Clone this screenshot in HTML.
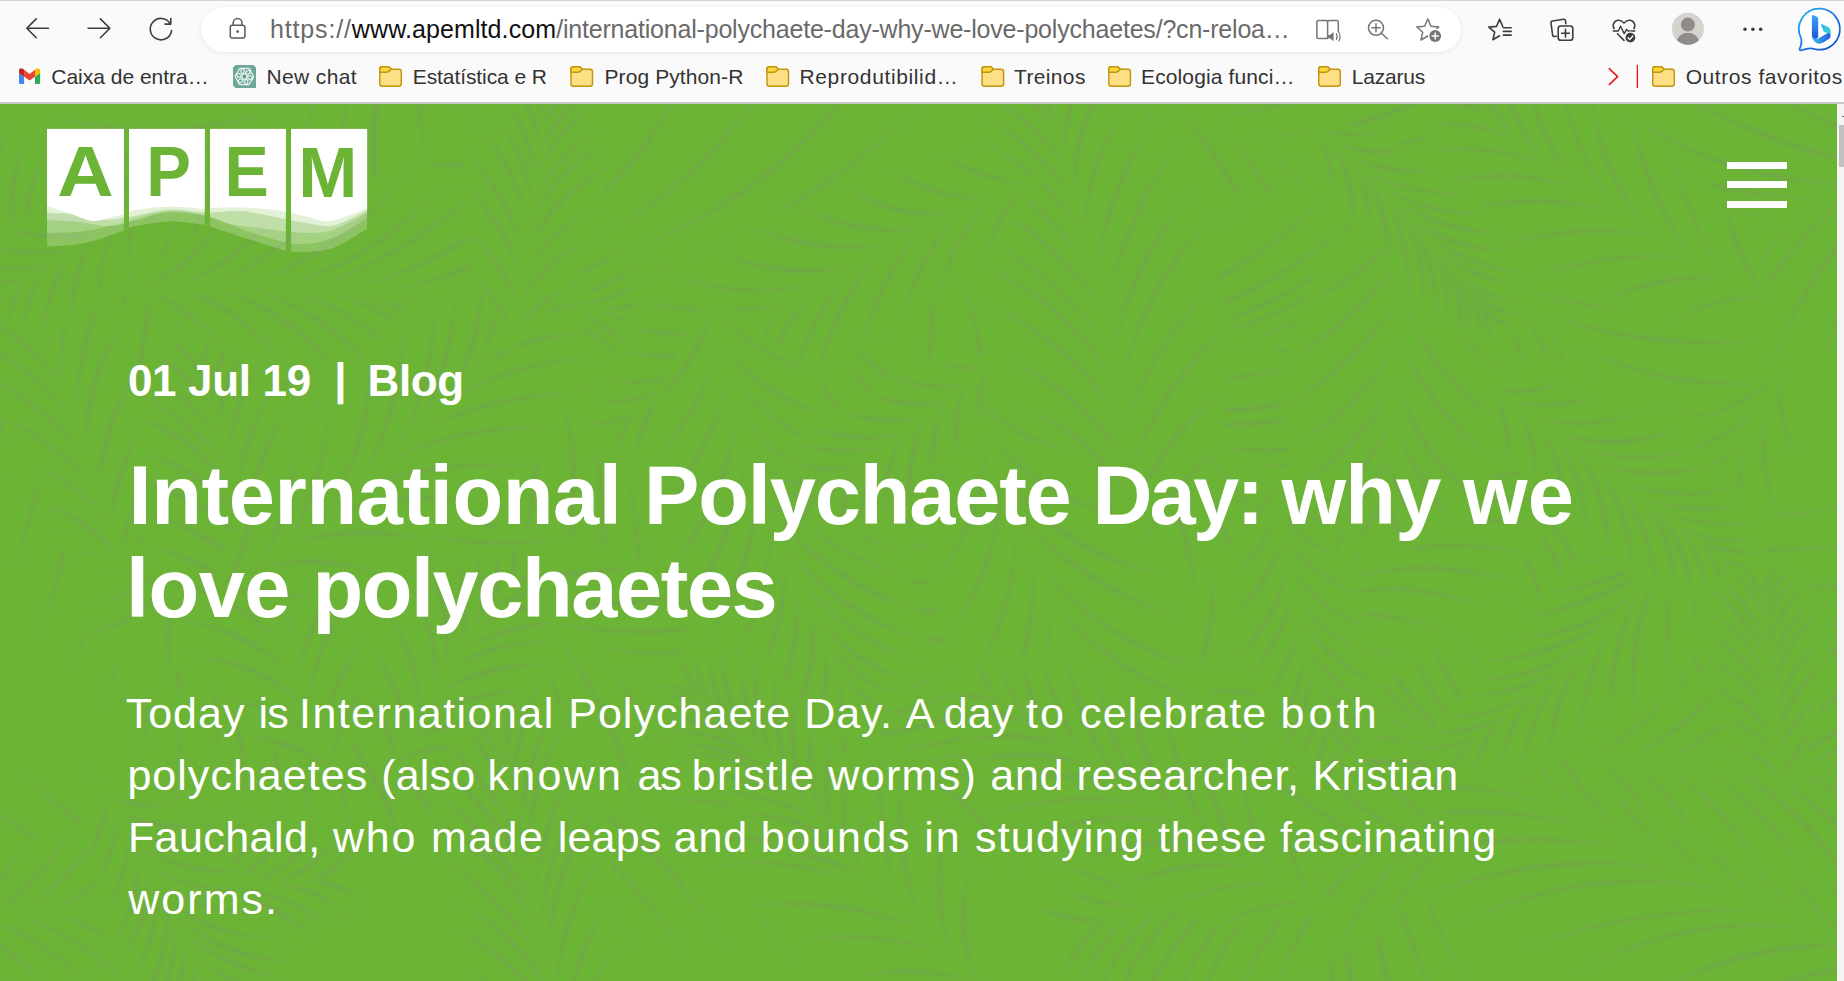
<!DOCTYPE html>
<html lang="en">
<head>
<meta charset="utf-8">
<title>International Polychaete Day: why we love polychaetes - APEM</title>
<style>
*{box-sizing:border-box;margin:0;padding:0}
html,body{width:1844px;height:981px;overflow:hidden;background:#6cb435}
body{position:relative;font-family:"Liberation Sans",sans-serif}
.abs{position:absolute}
/* ---------- browser chrome ---------- */
#chrome{position:absolute;left:0;top:0;width:1844px;height:104px;background:#fafafa;box-shadow:inset 0 1px 0 #d4d4d4,inset 0 -2px 0 #c8c8c8}
#pill{position:absolute;left:201px;top:7px;width:1260px;height:45px;border-radius:23px;background:#fff;box-shadow:0 1px 5px rgba(0,0,0,.075),0 0 1px rgba(0,0,0,.05)}
#url{position:absolute;left:270px;top:13.5px;font-size:25px;line-height:30px;white-space:pre;color:#6a6a6a;letter-spacing:-0.08px}
#url b{font-weight:400;color:#111}
.bm{position:absolute;top:64px;height:26px;font-size:21px;line-height:26px;color:#333;white-space:pre}
/* ---------- page ---------- */
#page{position:absolute;left:0;top:104px;width:1837px;height:877px;background:#6cb435;overflow:hidden}
#sb{position:absolute;left:1837px;top:104px;width:7px;height:877px;background:#f4f4f4}
#sb b{position:absolute;left:5px;top:12px;width:2px;height:1px;background:#777}
#sb i{position:absolute;left:2px;top:21px;width:5px;height:42px;background:#c1c1c1}
h1,p{font:inherit}
.t{position:absolute;left:128px;color:#fff;white-space:pre}
.date{font-weight:700;font-size:44px;line-height:50px}
.h1w{font-weight:700;font-size:83px;line-height:92px;height:92px}
.p{font-weight:400;font-size:43px;line-height:62px;letter-spacing:1.14px}
</style>
</head>
<body>
<div id="page">
<!--PATTERN--><svg class="abs" style="left:0;top:0" width="1837" height="877" viewBox="0 0 1837 877"><defs><filter id="sf" x="0" y="0" width="1837" height="877" filterUnits="userSpaceOnUse"><feGaussianBlur stdDeviation="0.9"/></filter></defs><g filter="url(#sf)"><path fill="#6cb435" d="M2071,13L1904,-45L1820,-41L1746,-31L1666,-22L1611,-2L1548,16L1505,41L1433,59L1394,85L1382,117L1372,147L1352,174L1318,199L1299,226L1293,251L1272,275L1287,372L1309,357L1344,349L1362,364L1383,378L1423,366L1456,367L1472,391L1514,381L1576,343L1615,339L1661,326L1711,307L1765,283L1825,250L1897,199L1955,170Z"/><path fill="#808080" fill-opacity=".2" d="M2052,19Q1968,10 1904,-45Q1965,18 2052,19ZM2052,19Q1979,79 1955,170Q1986,83 2052,19ZM2006,33Q1903,21 1820,-41Q1899,31 2006,33ZM2006,33Q1915,93 1897,199Q1924,99 2006,33ZM1960,48Q1842,39 1746,-31Q1838,47 1960,48ZM1960,48Q1857,126 1825,250Q1866,132 1960,48ZM1914,63Q1779,51 1666,-22Q1776,60 1914,63ZM1914,63Q1803,148 1765,283Q1810,153 1914,63ZM1868,79Q1726,81 1611,-2Q1724,89 1868,79ZM1868,79Q1743,161 1711,307Q1751,167 1868,79ZM1822,95Q1676,86 1548,16Q1674,95 1822,95ZM1822,95Q1709,188 1661,326Q1716,193 1822,95ZM1776,111Q1634,102 1505,41Q1632,110 1776,111ZM1776,111Q1659,199 1615,339Q1665,204 1776,111ZM1731,128Q1573,133 1433,59Q1571,143 1731,128ZM1731,128Q1627,216 1576,343Q1634,221 1731,128ZM1686,145Q1532,151 1394,85Q1530,162 1686,145ZM1686,145Q1564,237 1514,381Q1571,242 1686,145ZM1641,163Q1506,168 1382,117Q1504,179 1641,163ZM1641,163Q1511,243 1472,391Q1518,249 1641,163ZM1596,181Q1480,191 1372,147Q1479,199 1596,181ZM1596,181Q1491,248 1456,367Q1500,254 1596,181ZM1551,200Q1449,206 1352,174Q1448,214 1551,200ZM1551,200Q1456,259 1423,366Q1463,265 1551,200ZM1506,219Q1410,232 1318,199Q1409,241 1506,219ZM1506,219Q1416,276 1383,378Q1423,282 1506,219ZM1462,238Q1378,257 1299,226Q1378,265 1462,238ZM1462,238Q1386,281 1362,364Q1394,287 1462,238ZM1417,258Q1355,272 1293,251Q1354,281 1417,258ZM1417,258Q1366,291 1344,349Q1374,297 1417,258ZM1373,278Q1322,283 1272,275Q1322,293 1373,278ZM1373,278Q1327,306 1309,357Q1334,312 1373,278Z"/><path fill="#6cb435" d="M1056,-33L1159,104L1214,138L1269,179L1332,240L1378,278L1422,317L1448,320L1480,338L1521,388L1554,422L1579,434L1601,436L1620,431L1645,449L1666,447L1691,474L1713,483L1592,683L1784,423L1781,389L1796,359L1774,316L1773,278L1761,236L1775,195L1746,149L1697,105L1657,62L1600,24L1546,-11L1483,-41L1444,-77L1353,-89L1307,-116L1206,-109Z"/><path fill="#808080" fill-opacity=".2" d="M1075,-28Q1136,26 1159,104Q1143,21 1075,-28ZM1075,-28Q1157,-42 1206,-109Q1153,-49 1075,-28ZM1122,-17Q1185,51 1214,138Q1193,46 1122,-17ZM1122,-17Q1231,-35 1307,-116Q1227,-43 1122,-17ZM1168,-3Q1242,75 1269,179Q1251,70 1168,-3ZM1168,-3Q1275,-14 1353,-89Q1271,-22 1168,-3ZM1213,13Q1298,113 1332,240Q1307,108 1213,13ZM1213,13Q1342,3 1444,-77Q1338,-7 1213,13ZM1257,31Q1356,136 1378,278Q1365,132 1257,31ZM1257,31Q1384,37 1483,-41Q1381,28 1257,31ZM1301,51Q1396,168 1422,317Q1403,165 1301,51ZM1301,51Q1432,52 1546,-11Q1430,44 1301,51ZM1344,72Q1431,181 1448,320Q1440,177 1344,72ZM1344,72Q1480,94 1600,24Q1479,86 1344,72ZM1385,96Q1461,206 1480,338Q1469,203 1385,96ZM1385,96Q1525,116 1657,62Q1524,107 1385,96ZM1426,121Q1497,246 1521,388Q1505,243 1426,121ZM1426,121Q1564,153 1697,105Q1563,144 1426,121ZM1465,149Q1548,273 1554,422Q1556,270 1465,149ZM1465,149Q1606,189 1746,149Q1606,181 1465,149ZM1503,178Q1582,294 1579,434Q1592,291 1503,178ZM1503,178Q1636,231 1775,195Q1637,223 1503,178ZM1540,208Q1595,316 1601,436Q1605,313 1540,208ZM1540,208Q1647,252 1761,236Q1648,242 1540,208ZM1575,241Q1629,328 1620,431Q1637,326 1575,241ZM1575,241Q1668,293 1773,278Q1670,284 1575,241ZM1609,274Q1643,358 1645,449Q1652,357 1609,274ZM1609,274Q1683,328 1774,316Q1686,319 1609,274ZM1642,310Q1673,375 1666,447Q1684,373 1642,310ZM1642,310Q1712,355 1796,359Q1715,346 1642,310ZM1672,347Q1694,409 1691,474Q1702,407 1672,347ZM1672,347Q1720,384 1781,389Q1723,377 1672,347ZM1701,385Q1717,432 1713,483Q1726,431 1701,385ZM1701,385Q1735,420 1784,423Q1740,411 1701,385Z"/><path fill="#6cb435" d="M11,163L-24,318L-8,387L9,473L36,540L69,577L103,613L139,671L177,697L212,703L245,706L280,723L312,729L343,735L365,723L396,736L554,612L442,676L428,657L433,644L413,622L416,607L426,595L406,572L375,542L361,518L320,480L298,449L258,407L228,368L184,318L147,269Z"/><path fill="#808080" fill-opacity=".2" d="M17,182Q11,254 -24,318Q20,257 17,182ZM17,182Q66,249 147,269Q71,243 17,182ZM32,221Q29,308 -8,387Q37,310 32,221ZM32,221Q92,294 184,318Q97,286 32,221ZM48,259Q48,370 9,473Q57,371 48,259ZM48,259Q120,345 228,368Q125,336 48,259ZM66,297Q79,422 36,540Q89,423 66,297ZM66,297Q139,393 258,407Q144,384 66,297ZM86,334Q110,458 69,577Q119,458 86,334ZM86,334Q175,422 298,449Q179,414 86,334ZM107,370Q136,492 103,613Q145,492 107,370ZM107,370Q191,469 320,480Q196,460 107,370ZM129,406Q156,537 139,671Q166,537 129,406ZM129,406Q225,502 361,518Q229,494 129,406ZM152,440Q187,567 177,697Q196,566 152,440ZM152,440Q246,530 375,542Q250,521 152,440ZM177,474Q230,583 212,703Q238,582 177,474ZM177,474Q278,555 406,572Q282,546 177,474ZM203,506Q241,603 245,706Q251,601 203,506ZM203,506Q302,581 426,595Q306,571 203,506ZM231,538Q282,623 280,723Q290,621 231,538ZM231,538Q314,598 416,607Q318,588 231,538ZM260,568Q300,644 312,729Q309,641 260,568ZM260,568Q328,621 413,622Q331,612 260,568ZM290,597Q334,659 343,735Q343,656 290,597ZM290,597Q352,649 433,644Q354,641 290,597ZM321,626Q349,671 365,723Q358,668 321,626ZM321,626Q369,660 428,657Q371,651 321,626ZM353,652Q381,691 396,736Q389,686 353,652ZM353,652Q392,683 442,676Q394,675 353,652Z"/><path fill="#6cb435" d="M668,-20L454,-28L421,4L328,36L288,72L232,111L191,151L133,196L127,233L77,281L79,316L78,351L59,392L51,429L68,454L92,472L86,504L86,532L224,668L171,574L190,557L208,553L223,572L246,542L258,575L283,538L301,546L323,527L353,483L379,456L407,429L440,383L483,307L519,263L560,204L600,157Z"/><path fill="#808080" fill-opacity=".2" d="M651,-9Q550,6 454,-28Q549,15 651,-9ZM651,-9Q594,64 600,157Q604,67 651,-9ZM616,15Q518,30 421,4Q517,38 616,15ZM616,15Q561,102 560,204Q570,104 616,15ZM582,40Q454,80 328,36Q454,89 582,40ZM582,40Q504,138 519,263Q513,141 582,40ZM549,65Q419,98 288,72Q419,108 549,65ZM549,65Q468,173 483,307Q478,176 549,65ZM516,92Q377,146 232,111Q378,156 516,92ZM516,92Q432,226 440,383Q442,228 516,92ZM484,119Q340,164 191,151Q341,173 484,119ZM484,119Q393,261 407,429Q402,263 484,119ZM452,147Q300,223 133,196Q302,231 452,147ZM452,147Q364,290 379,456Q373,292 452,147ZM422,176Q282,244 127,233Q284,253 422,176ZM422,176Q330,317 353,483Q339,319 422,176ZM392,206Q241,271 77,281Q243,279 392,206ZM392,206Q303,355 323,527Q313,357 392,206ZM363,236Q233,320 79,316Q236,329 363,236ZM363,236Q290,383 301,546Q300,385 363,236ZM335,268Q220,352 78,351Q223,360 335,268ZM335,268Q262,394 283,538Q273,396 335,268ZM307,300Q193,373 59,392Q196,382 307,300ZM307,300Q240,430 258,575Q248,431 307,300ZM281,332Q180,415 51,429Q183,423 281,332ZM281,332Q223,431 246,542Q231,432 281,332ZM255,366Q173,434 68,454Q177,443 255,366ZM255,366Q207,464 223,572Q216,465 255,366ZM230,400Q170,454 92,472Q174,461 230,400ZM230,400Q193,472 208,553Q203,474 230,400ZM206,435Q152,480 86,504Q156,487 206,435ZM206,435Q179,493 190,557Q187,494 206,435ZM183,470Q140,510 86,532Q146,518 183,470ZM183,470Q157,520 171,574Q166,521 183,470Z"/><path fill="#6cb435" d="M384,807L249,696L160,668L79,655L12,659L-44,674L-83,699L-158,709L-205,734L-231,767L-218,807L-235,836L-249,864L-252,891L-221,1066L-219,972L-196,971L-194,993L-174,997L-154,1000L-125,996L-99,996L-83,1005L-24,980L12,975L90,941L161,916L239,891Z"/><path fill="#808080" fill-opacity=".2" d="M364,805Q299,758 249,696Q292,766 364,805ZM364,805Q284,822 239,891Q289,830 364,805ZM320,802Q224,754 160,668Q217,762 320,802ZM320,802Q222,833 161,916Q227,841 320,802ZM276,802Q161,750 79,655Q156,757 276,802ZM276,802Q156,836 90,941Q161,843 276,802ZM232,803Q110,749 12,659Q104,758 232,803ZM232,803Q97,857 12,975Q102,863 232,803ZM188,805Q60,761 -44,674Q56,769 188,805ZM188,805Q61,867 -24,980Q67,874 188,805ZM144,810Q20,775 -83,699Q16,784 144,810ZM144,810Q4,877 -83,1005Q10,883 144,810ZM100,817Q-45,801 -158,709Q-48,809 100,817ZM100,817Q-29,873 -99,996Q-23,880 100,817ZM57,825Q-85,812 -205,734Q-89,822 57,825ZM57,825Q-57,886 -125,996Q-50,894 57,825ZM14,835Q-118,838 -231,767Q-121,846 14,835ZM14,835Q-101,885 -154,1000Q-95,892 14,835ZM-28,847Q-127,847 -218,807Q-129,857 -28,847ZM-28,847Q-126,898 -174,997Q-119,904 -28,847ZM-70,861Q-156,874 -235,836Q-158,883 -70,861ZM-70,861Q-160,901 -194,993Q-153,907 -70,861ZM-111,876Q-182,886 -249,864Q-182,896 -111,876ZM-111,876Q-171,908 -196,971Q-163,916 -111,876ZM-152,893Q-202,905 -252,891Q-202,913 -152,893ZM-152,893Q-199,920 -219,972Q-193,926 -152,893Z"/><path fill="#6cb435" d="M1342,281L1451,450L1507,504L1559,555L1591,569L1633,608L1680,659L1709,677L1740,702L1765,714L1769,679L1795,697L1804,675L1827,688L1809,747L1890,627L1892,602L1905,578L1907,547L1903,514L1887,477L1856,439L1851,402L1780,364L1744,329L1664,300L1604,272L1535,250Z"/><path fill="#808080" fill-opacity=".2" d="M1360,289Q1429,356 1451,450Q1438,351 1360,289ZM1360,289Q1453,293 1535,250Q1451,282 1360,289ZM1400,307Q1484,389 1507,504Q1493,384 1400,307ZM1400,307Q1507,319 1604,272Q1505,310 1400,307ZM1439,327Q1526,427 1559,555Q1535,422 1439,327ZM1439,327Q1557,359 1664,300Q1556,349 1439,327ZM1477,348Q1567,442 1591,569Q1575,438 1477,348ZM1477,348Q1613,371 1744,329Q1613,362 1477,348ZM1515,370Q1598,478 1633,608Q1607,473 1515,370ZM1515,370Q1648,401 1780,364Q1648,392 1515,370ZM1552,393Q1650,509 1680,659Q1660,505 1552,393ZM1552,393Q1700,435 1851,402Q1701,425 1552,393ZM1588,418Q1683,532 1709,677Q1690,528 1588,418ZM1588,418Q1719,464 1856,439Q1720,455 1588,418ZM1624,443Q1714,558 1740,702Q1722,554 1624,443ZM1624,443Q1750,503 1887,477Q1751,493 1624,443ZM1659,470Q1739,580 1765,714Q1747,576 1659,470ZM1659,470Q1771,543 1903,514Q1773,533 1659,470ZM1692,497Q1746,582 1769,679Q1754,578 1692,497ZM1692,497Q1791,562 1907,547Q1793,552 1692,497ZM1725,526Q1775,606 1795,697Q1783,602 1725,526ZM1725,526Q1806,586 1905,578Q1808,577 1725,526ZM1757,556Q1789,612 1804,675Q1799,609 1757,556ZM1757,556Q1815,607 1892,602Q1818,598 1757,556ZM1789,587Q1815,635 1827,688Q1824,631 1789,587ZM1789,587Q1830,629 1890,627Q1834,619 1789,587Z"/><path fill="#6cb435" d="M514,-213L355,-205L281,-171L234,-135L156,-100L120,-64L58,-27L36,8L8,44L-26,79L-46,113L-96,149L-99,180L-110,211L-107,240L-118,269L-123,296L-139,325L-63,365L-36,369L-6,372L30,358L65,353L100,351L138,339L180,306L219,296L258,286L303,232L347,167L387,154L428,67L468,16L505,-54Z"/><path fill="#808080" fill-opacity=".2" d="M499,-199Q427,-190 355,-205Q426,-180 499,-199ZM499,-199Q479,-125 505,-54Q488,-126 499,-199ZM465,-165Q373,-144 281,-171Q372,-134 465,-165ZM465,-165Q442,-74 468,16Q452,-74 465,-165ZM431,-132Q332,-107 234,-135Q332,-98 431,-132ZM431,-132Q404,-32 428,67Q414,-32 431,-132ZM396,-98Q276,-77 156,-100Q276,-69 396,-98ZM396,-98Q351,26 387,154Q362,27 396,-98ZM362,-65Q241,-28 120,-64Q241,-17 362,-65ZM362,-65Q323,49 347,167Q331,49 362,-65ZM327,-33Q193,3 58,-27Q193,14 327,-33ZM327,-33Q266,95 303,232Q276,96 327,-33ZM292,-0Q165,44 36,8Q165,52 292,-0ZM292,-0Q228,138 258,286Q237,139 292,-0ZM256,32Q133,65 8,44Q134,74 256,32ZM256,32Q202,159 219,296Q211,160 256,32ZM221,64Q99,94 -26,79Q99,104 221,64ZM221,64Q160,178 180,306Q169,180 221,64ZM185,96Q72,136 -46,113Q72,145 185,96ZM185,96Q128,211 138,339Q138,213 185,96ZM149,128Q30,173 -96,149Q30,184 149,128ZM149,128Q97,233 100,351Q106,235 149,128ZM113,159Q9,189 -99,180Q10,198 113,159ZM113,159Q60,249 65,353Q68,251 113,159ZM77,191Q-15,219 -110,211Q-14,229 77,191ZM77,191Q21,266 30,358Q30,268 77,191ZM40,221Q-31,248 -107,240Q-30,257 40,221ZM40,221Q-5,290 -6,372Q5,293 40,221ZM3,252Q-56,272 -118,269Q-55,281 3,252ZM3,252Q-33,305 -36,369Q-23,308 3,252ZM-34,283Q-77,300 -123,296Q-75,309 -34,283ZM-34,283Q-66,317 -63,365Q-56,321 -34,283Z"/><path fill="#6cb435" d="M1481,198L1335,255L1280,310L1261,354L1216,409L1178,463L1146,516L1123,566L1117,607L1114,646L1119,680L1125,711L1112,755L1135,770L1135,802L1195,858L1199,833L1220,807L1243,799L1267,793L1292,783L1317,759L1342,736L1362,669L1390,659L1410,589L1435,551L1455,477L1478,423L1495,339Z"/><path fill="#808080" fill-opacity=".2" d="M1471,215Q1409,255 1335,255Q1412,265 1471,215ZM1471,215Q1457,282 1495,339Q1467,280 1471,215ZM1447,255Q1370,304 1280,310Q1373,313 1447,255ZM1447,255Q1438,344 1478,423Q1447,342 1447,255ZM1423,295Q1350,345 1261,354Q1352,352 1423,295ZM1423,295Q1411,391 1455,477Q1419,390 1423,295ZM1400,336Q1320,403 1216,409Q1323,410 1400,336ZM1400,336Q1377,450 1435,551Q1387,449 1400,336ZM1377,377Q1289,445 1178,463Q1292,453 1377,377ZM1377,377Q1350,490 1410,589Q1361,488 1377,377ZM1355,418Q1262,492 1146,516Q1266,499 1355,418ZM1355,418Q1333,544 1390,659Q1344,543 1355,418ZM1333,459Q1245,546 1123,566Q1249,553 1333,459ZM1333,459Q1304,570 1362,669Q1313,569 1333,459ZM1312,500Q1227,577 1117,607Q1231,584 1312,500ZM1312,500Q1292,623 1342,736Q1302,621 1312,500ZM1291,542Q1214,614 1114,646Q1219,622 1291,542ZM1291,542Q1260,656 1317,759Q1270,655 1291,542ZM1270,584Q1209,655 1119,680Q1214,662 1270,584ZM1270,584Q1239,688 1292,783Q1249,687 1270,584ZM1250,626Q1200,688 1125,711Q1206,695 1250,626ZM1250,626Q1223,713 1267,793Q1233,712 1250,626ZM1231,669Q1183,727 1112,755Q1189,736 1231,669ZM1231,669Q1212,736 1243,799Q1222,735 1231,669ZM1212,711Q1180,749 1135,770Q1185,757 1212,711ZM1212,711Q1201,760 1220,807Q1210,760 1212,711ZM1193,754Q1170,785 1135,802Q1176,792 1193,754ZM1193,754Q1181,795 1199,833Q1191,794 1193,754Z"/><path fill="#6cb435" d="M625,635L672,468L659,387L644,289L615,239L585,169L549,135L513,101L477,89L442,72L407,50L384,77L355,63L221,125L304,112L291,124L302,150L300,169L281,177L301,211L323,248L321,269L388,343L397,375L457,450L506,521Z"/><path fill="#808080" fill-opacity=".2" d="M620,616Q629,536 672,468Q620,533 620,616ZM620,616Q581,547 506,521Q575,553 620,616ZM606,570Q611,472 659,387Q602,470 606,570ZM606,570Q548,489 457,450Q542,497 606,570ZM591,525Q580,399 644,289Q571,397 591,525ZM591,525Q521,415 397,375Q516,422 591,525ZM574,481Q557,353 615,239Q546,352 574,481ZM574,481Q506,379 388,343Q500,386 574,481ZM555,437Q535,299 585,169Q526,298 555,437ZM555,437Q472,305 321,269Q467,313 555,437ZM535,394Q503,263 549,135Q492,262 535,394ZM535,394Q452,287 323,248Q446,296 535,394ZM513,352Q471,226 513,101Q461,226 513,352ZM513,352Q426,253 301,211Q421,261 513,352ZM490,310Q452,202 477,89Q443,202 490,310ZM490,310Q407,210 281,177Q403,217 490,310ZM465,270Q424,174 442,72Q415,175 465,270ZM465,270Q400,190 300,169Q395,200 465,270ZM439,230Q406,143 407,50Q398,145 439,230ZM439,230Q385,164 302,150Q381,172 439,230ZM411,192Q380,138 384,77Q372,140 411,192ZM411,192Q360,142 291,124Q355,150 411,192ZM382,154Q360,111 355,63Q351,114 382,154ZM382,154Q353,115 304,112Q349,122 382,154Z"/><path fill="#6cb435" d="M1528,690L1387,585L1310,551L1239,519L1189,504L1152,500L1079,460L1050,461L991,430L972,439L913,405L874,391L861,405L826,393L797,386L778,392L745,379L740,401L708,388L684,385L706,248L639,463L674,488L688,512L672,538L700,564L719,591L720,622L763,647L791,674L825,701L869,724L923,742L977,759L1015,782L1090,787L1155,793L1240,786L1307,785L1353,795Z"/><path fill="#808080" fill-opacity=".2" d="M1508,689Q1432,655 1387,585Q1427,661 1508,689ZM1508,689Q1411,713 1353,795Q1417,722 1508,689ZM1464,686Q1377,630 1310,551Q1370,638 1464,686ZM1464,686Q1372,715 1307,785Q1377,723 1464,686ZM1420,682Q1312,620 1239,519Q1305,627 1420,682ZM1420,682Q1314,707 1240,786Q1320,716 1420,682ZM1376,677Q1253,622 1189,504Q1247,630 1376,677ZM1376,677Q1245,697 1155,793Q1250,706 1376,677ZM1332,671Q1222,607 1152,500Q1215,614 1332,671ZM1332,671Q1195,694 1090,787Q1199,703 1332,671ZM1289,663Q1162,584 1079,460Q1155,591 1289,663ZM1289,663Q1132,677 1015,782Q1135,685 1289,663ZM1245,655Q1114,592 1050,461Q1109,597 1245,655ZM1245,655Q1091,655 977,759Q1094,663 1245,655ZM1202,645Q1067,567 991,430Q1059,574 1202,645ZM1202,645Q1045,643 923,742Q1048,653 1202,645ZM1159,635Q1047,555 972,439Q1041,561 1159,635ZM1159,635Q999,630 869,724Q1002,640 1159,635ZM1116,623Q995,532 913,405Q988,539 1116,623ZM1116,623Q956,606 825,701Q958,616 1116,623ZM1074,610Q940,531 874,391Q933,538 1074,610ZM1074,610Q922,597 791,674Q924,605 1074,610ZM1032,597Q922,522 861,405Q915,529 1032,597ZM1032,597Q889,579 763,647Q891,588 1032,597ZM990,582Q881,511 826,393Q874,517 990,582ZM990,582Q850,567 720,622Q852,577 990,582ZM949,566Q857,490 797,386Q849,496 949,566ZM949,566Q829,531 719,591Q829,539 949,566ZM908,549Q823,487 778,392Q817,492 908,549ZM908,549Q801,522 700,564Q802,532 908,549ZM868,531Q786,472 745,379Q778,478 868,531ZM868,531Q769,500 672,538Q769,509 868,531ZM828,512Q768,469 740,401Q761,475 828,512ZM828,512Q758,491 688,512Q758,500 828,512ZM788,492Q732,452 708,388Q726,458 788,492ZM788,492Q732,467 674,488Q732,478 788,492ZM749,472Q708,435 684,385Q700,441 749,472ZM749,472Q696,443 639,463Q695,451 749,472Z"/><path fill="#6cb435" d="M461,142L600,262L697,315L762,339L810,349L880,388L929,408L970,419L990,404L1000,374L1016,352L1041,345L1051,439L1083,240L1083,201L1082,156L1078,106L1063,52L991,23L929,-8L872,-41L779,-42L688,-33L588,0Z"/><path fill="#808080" fill-opacity=".2" d="M481,141Q554,189 600,262Q560,183 481,141ZM481,141Q556,87 588,0Q548,80 481,141ZM533,139Q637,207 697,315Q644,200 533,139ZM533,139Q643,82 688,-33Q636,76 533,139ZM585,140Q701,215 762,339Q708,209 585,140ZM585,140Q712,81 779,-42Q706,75 585,140ZM637,144Q745,228 810,349Q753,221 637,144ZM637,144Q785,90 872,-41Q778,82 637,144ZM688,150Q816,243 880,388Q824,237 688,150ZM688,150Q828,101 929,-8Q824,94 688,150ZM740,160Q873,254 929,408Q880,249 740,160ZM740,160Q891,139 991,23Q887,132 740,160ZM790,172Q920,267 970,419Q927,261 790,172ZM790,172Q944,153 1063,52Q941,145 790,172ZM840,187Q946,274 990,404Q953,269 840,187ZM840,187Q972,185 1078,106Q969,176 840,187ZM889,205Q960,279 1000,374Q967,275 889,205ZM889,205Q993,213 1082,156Q991,203 889,205ZM937,225Q992,279 1016,352Q999,274 937,225ZM937,225Q1014,238 1083,201Q1012,227 937,225ZM983,248Q1023,290 1041,345Q1031,286 983,248ZM983,248Q1035,263 1083,240Q1034,254 983,248Z"/><path fill="#6cb435" d="M788,210L946,343L1035,377L1102,387L1195,415L1259,418L1318,416L1346,392L1416,395L1435,369L1438,336L1472,321L1467,291L1491,274L1507,175L1481,181L1451,174L1446,153L1449,127L1407,124L1396,103L1389,79L1345,74L1256,92L1206,88L1129,99L1040,116L978,118Z"/><path fill="#808080" fill-opacity=".2" d="M807,213Q888,266 946,343Q895,259 807,213ZM807,213Q908,193 978,118Q904,186 807,213ZM855,218Q968,271 1035,377Q975,264 855,218ZM855,218Q967,204 1040,116Q963,196 855,218ZM902,223Q1017,287 1102,387Q1023,279 902,223ZM902,223Q1039,204 1129,99Q1035,196 902,223ZM950,227Q1090,298 1195,415Q1096,290 950,227ZM950,227Q1106,209 1206,88Q1102,201 950,227ZM997,231Q1147,297 1259,418Q1154,289 997,231ZM997,231Q1152,209 1256,92Q1148,201 997,231ZM1045,233Q1206,289 1318,416Q1211,280 1045,233ZM1045,233Q1225,209 1345,74Q1220,201 1045,233ZM1093,235Q1245,273 1346,392Q1249,265 1093,235ZM1093,235Q1271,215 1389,79Q1267,207 1093,235ZM1140,237Q1305,269 1416,395Q1309,262 1140,237ZM1140,237Q1294,219 1396,103Q1290,211 1140,237ZM1188,237Q1333,262 1435,369Q1337,255 1188,237ZM1188,237Q1314,213 1407,124Q1310,205 1188,237ZM1236,237Q1352,256 1438,336Q1357,247 1236,237ZM1236,237Q1359,215 1449,127Q1355,207 1236,237ZM1283,236Q1384,264 1472,321Q1388,255 1283,236ZM1283,236Q1375,216 1446,153Q1372,209 1283,236ZM1331,235Q1406,245 1467,291Q1409,238 1331,235ZM1331,235Q1402,226 1451,174Q1398,217 1331,235ZM1379,232Q1439,243 1491,274Q1442,233 1379,232ZM1379,232Q1438,224 1481,181Q1434,215 1379,232Z"/><path fill="#6cb435" d="M881,73L881,226L922,305L970,362L1019,386L1074,434L1133,475L1198,518L1244,508L1297,516L1341,508L1383,498L1429,496L1459,478L1490,465L1617,220L1508,393L1484,379L1457,366L1460,345L1431,330L1397,316L1379,298L1357,279L1303,260L1263,238L1196,212L1154,185L1096,152L1019,111Z"/><path fill="#808080" fill-opacity=".2" d="M893,89Q899,158 881,226Q908,159 893,89ZM893,89Q952,124 1019,111Q954,113 893,89ZM924,127Q936,216 922,305Q945,216 924,127ZM924,127Q1005,173 1096,152Q1007,164 924,127ZM957,164Q994,261 970,362Q1004,261 957,164ZM957,164Q1053,203 1154,185Q1054,195 957,164ZM993,199Q1034,288 1019,386Q1042,287 993,199ZM993,199Q1092,233 1196,212Q1093,224 993,199ZM1030,231Q1074,328 1074,434Q1083,326 1030,231ZM1030,231Q1145,269 1263,238Q1146,260 1030,231ZM1069,262Q1131,359 1133,475Q1140,357 1069,262ZM1069,262Q1186,297 1303,260Q1186,287 1069,262ZM1110,290Q1187,391 1198,518Q1197,388 1110,290ZM1110,290Q1235,333 1357,279Q1235,322 1110,290ZM1152,316Q1227,398 1244,508Q1236,394 1152,316ZM1152,316Q1268,335 1379,298Q1267,325 1152,316ZM1195,339Q1268,415 1297,516Q1275,411 1195,339ZM1195,339Q1301,366 1397,316Q1300,356 1195,339ZM1240,360Q1310,421 1341,508Q1318,416 1240,360ZM1240,360Q1340,373 1431,330Q1339,363 1240,360ZM1286,379Q1349,427 1383,498Q1356,421 1286,379ZM1286,379Q1379,393 1460,345Q1378,385 1286,379ZM1333,394Q1391,436 1429,496Q1397,430 1333,394ZM1333,394Q1400,403 1457,366Q1398,395 1333,394ZM1381,407Q1430,432 1459,478Q1437,425 1381,407ZM1381,407Q1439,416 1484,379Q1436,406 1381,407ZM1429,417Q1463,437 1490,465Q1468,430 1429,417ZM1429,417Q1474,421 1508,393Q1471,411 1429,417Z"/><path fill="#6cb435" d="M254,568L353,741L406,767L468,804L521,821L589,853L635,854L693,865L728,851L798,868L824,846L843,821L882,812L890,785L906,765L922,747L965,571L925,664L912,654L907,640L894,629L879,619L874,604L816,608L786,600L779,586L738,580L705,571L619,573L560,566L519,554L432,549Z"/><path fill="#808080" fill-opacity=".2" d="M272,577Q338,647 353,741Q346,643 272,577ZM272,577Q357,592 432,549Q355,582 272,577ZM309,595Q384,666 406,767Q393,661 309,595ZM309,595Q419,603 519,554Q418,595 309,595ZM347,612Q437,689 468,804Q446,684 347,612ZM347,612Q462,629 560,566Q460,620 347,612ZM385,627Q479,707 521,821Q487,701 385,627ZM385,627Q510,635 619,573Q508,624 385,627ZM424,642Q540,721 589,853Q547,715 424,642ZM424,642Q579,661 705,571Q576,652 424,642ZM463,654Q582,726 635,854Q588,720 463,654ZM463,654Q611,656 738,580Q609,647 463,654ZM503,666Q616,748 693,865Q622,742 503,666ZM503,666Q654,671 779,586Q652,663 503,666ZM543,676Q662,736 728,851Q668,729 543,676ZM543,676Q676,674 786,600Q673,666 543,676ZM583,684Q722,739 798,868Q728,732 583,684ZM583,684Q712,681 816,608Q709,672 583,684ZM624,692Q739,749 824,846Q745,741 624,692ZM624,692Q761,683 874,604Q758,675 624,692ZM665,698Q766,742 843,821Q772,734 665,698ZM665,698Q788,701 879,619Q785,694 665,698ZM706,702Q812,729 882,812Q817,721 706,702ZM706,702Q810,693 894,629Q807,685 706,702ZM747,705Q825,734 890,785Q829,726 747,705ZM747,705Q836,694 907,640Q832,685 747,705ZM788,707Q853,725 906,765Q856,718 788,707ZM788,707Q860,702 912,654Q856,694 788,707ZM830,707Q880,717 922,747Q884,708 830,707ZM830,707Q887,708 925,664Q883,699 830,707Z"/><path fill="#6cb435" d="M485,204L483,408L518,457L554,497L590,548L629,611L670,684L709,701L751,741L792,769L831,786L864,772L899,778L928,763L960,763L990,764L1023,775L1046,763L1141,706L1111,681L1114,657L1091,630L1097,605L1098,578L1093,550L1063,520L1057,491L1017,460L992,429L981,398L918,366L894,334L836,303L785,271L742,239L665,209Z"/><path fill="#808080" fill-opacity=".2" d="M499,218Q517,315 483,408Q525,316 499,218ZM499,218Q583,240 665,209Q583,230 499,218ZM529,249Q544,354 518,457Q555,355 529,249ZM529,249Q637,278 742,239Q636,270 529,249ZM559,279Q586,389 554,497Q596,389 559,279ZM559,279Q673,306 785,271Q673,298 559,279ZM589,309Q612,428 590,548Q621,428 589,309ZM589,309Q713,342 836,303Q713,334 589,309ZM620,339Q652,474 629,611Q660,474 620,339ZM620,339Q758,369 894,334Q758,361 620,339ZM651,368Q711,523 670,684Q721,522 651,368ZM651,368Q785,402 918,366Q785,394 651,368ZM683,397Q738,545 709,701Q747,544 683,397ZM683,397Q832,457 981,398Q832,448 683,397ZM714,426Q784,577 751,741Q794,576 714,426ZM714,426Q853,470 992,429Q853,460 714,426ZM746,454Q818,604 792,769Q827,603 746,454ZM746,454Q880,507 1017,460Q881,497 746,454ZM778,482Q832,630 831,786Q841,628 778,482ZM778,482Q916,531 1057,491Q917,521 778,482ZM811,510Q881,632 864,772Q891,630 811,510ZM811,510Q935,562 1063,520Q935,552 811,510ZM844,538Q900,651 899,778Q910,649 844,538ZM844,538Q966,582 1093,550Q967,573 844,538ZM877,565Q934,656 928,763Q943,654 877,565ZM877,565Q985,604 1098,578Q986,595 877,565ZM910,592Q952,673 960,763Q961,670 910,592ZM910,592Q1002,626 1097,605Q1002,617 910,592ZM943,619Q983,686 990,764Q992,683 943,619ZM943,619Q1015,657 1091,630Q1016,647 943,619ZM977,645Q1010,706 1023,775Q1018,703 977,645ZM977,645Q1043,679 1114,657Q1044,670 977,645ZM1011,671Q1034,715 1046,763Q1043,712 1011,671ZM1011,671Q1060,692 1111,681Q1060,684 1011,671Z"/><path fill="#6cb435" d="M1470,467L1319,561L1274,625L1221,694L1171,763L1164,807L1135,865L1102,926L1104,963L1132,980L1125,1020L1133,1049L1154,1065L1164,1088L1186,1127L1242,1117L1266,1101L1291,1093L1318,1082L1346,1074L1373,1047L1402,1023L1429,989L1447,912L1478,893L1496,823L1507,735L1514,642Z"/><path fill="#808080" fill-opacity=".2" d="M1462,486Q1398,537 1319,561Q1402,544 1462,486ZM1462,486Q1461,573 1514,642Q1471,570 1462,486ZM1444,531Q1367,593 1274,625Q1371,601 1444,531ZM1444,531Q1435,646 1507,735Q1443,643 1444,531ZM1426,576Q1333,652 1221,694Q1338,661 1426,576ZM1426,576Q1429,708 1496,823Q1440,706 1426,576ZM1407,621Q1303,716 1171,763Q1308,723 1407,621ZM1407,621Q1388,771 1478,893Q1396,769 1407,621ZM1389,666Q1293,764 1164,807Q1298,772 1389,666ZM1389,666Q1374,800 1447,912Q1383,798 1389,666ZM1370,711Q1266,810 1135,865Q1272,818 1370,711ZM1370,711Q1359,859 1429,989Q1369,856 1370,711ZM1352,756Q1249,874 1102,926Q1255,883 1352,756ZM1352,756Q1325,899 1402,1023Q1335,897 1352,756ZM1333,801Q1246,920 1104,963Q1251,928 1333,801ZM1333,801Q1319,930 1373,1047Q1329,928 1333,801ZM1314,846Q1241,937 1132,980Q1246,944 1314,846ZM1314,846Q1298,965 1346,1074Q1306,963 1314,846ZM1295,891Q1224,974 1125,1020Q1229,980 1295,891ZM1295,891Q1279,990 1318,1082Q1289,988 1295,891ZM1276,936Q1221,1013 1133,1049Q1226,1020 1276,936ZM1276,936Q1260,1017 1291,1093Q1269,1016 1276,936ZM1257,980Q1214,1032 1154,1065Q1219,1039 1257,980ZM1257,980Q1244,1042 1266,1101Q1253,1041 1257,980ZM1238,1025Q1207,1064 1164,1088Q1213,1070 1238,1025ZM1238,1025Q1218,1072 1242,1117Q1229,1072 1238,1025Z"/><path fill="#6cb435" d="M1966,882L1863,755L1800,713L1750,686L1686,639L1627,597L1580,571L1546,564L1506,548L1456,513L1412,487L1400,508L1354,478L1343,497L1314,489L1289,487L1263,482L1268,419L1222,540L1236,565L1241,589L1248,616L1274,645L1273,673L1315,704L1321,735L1366,765L1422,793L1457,822L1514,847L1572,871L1659,887L1720,907L1801,918Z"/><path fill="#808080" fill-opacity=".2" d="M1947,876Q1891,825 1863,755Q1884,830 1947,876ZM1947,876Q1867,875 1801,918Q1870,884 1947,876ZM1902,859Q1836,797 1800,713Q1828,802 1902,859ZM1902,859Q1804,856 1720,907Q1806,865 1902,859ZM1858,843Q1783,779 1750,686Q1776,783 1858,843ZM1858,843Q1750,829 1659,887Q1753,840 1858,843ZM1814,825Q1730,746 1686,639Q1723,750 1814,825ZM1814,825Q1684,803 1572,871Q1686,811 1814,825ZM1770,806Q1673,720 1627,597Q1665,724 1770,806ZM1770,806Q1637,797 1514,847Q1638,805 1770,806ZM1726,787Q1622,700 1580,571Q1613,706 1726,787ZM1726,787Q1585,752 1457,822Q1586,761 1726,787ZM1683,767Q1596,678 1546,564Q1589,683 1683,767ZM1683,767Q1549,738 1422,793Q1550,748 1683,767ZM1640,747Q1553,661 1506,548Q1546,666 1640,747ZM1640,747Q1501,713 1366,765Q1501,722 1640,747ZM1598,726Q1507,633 1456,513Q1500,637 1598,726ZM1598,726Q1458,681 1321,735Q1458,691 1598,726ZM1556,703Q1456,614 1412,487Q1448,619 1556,703ZM1556,703Q1435,657 1315,704Q1435,666 1556,703ZM1514,681Q1431,612 1400,508Q1424,616 1514,681ZM1514,681Q1395,633 1273,673Q1394,643 1514,681ZM1473,657Q1389,583 1354,478Q1380,589 1473,657ZM1473,657Q1376,611 1274,645Q1375,620 1473,657ZM1432,633Q1373,574 1343,497Q1365,579 1432,633ZM1432,633Q1344,588 1248,616Q1343,596 1432,633ZM1392,608Q1339,558 1314,489Q1330,563 1392,608ZM1392,608Q1319,577 1241,589Q1318,588 1392,608ZM1351,583Q1314,539 1289,487Q1306,544 1351,583ZM1351,583Q1297,553 1236,565Q1296,561 1351,583ZM1312,557Q1283,522 1263,482Q1274,528 1312,557ZM1312,557Q1271,526 1222,540Q1269,536 1312,557Z"/><path fill="#6cb435" d="M403,416L450,562L508,620L570,672L641,727L709,765L765,772L840,804L875,780L922,772L985,780L1014,757L1049,741L1067,716L1102,704L1182,471L1110,632L1076,625L1077,606L1042,598L1007,588L984,575L960,561L932,547L903,532L816,521L787,502L715,483L644,460L566,433Z"/><path fill="#808080" fill-opacity=".2" d="M418,428Q453,491 450,562Q463,488 418,428ZM418,428Q491,452 566,433Q492,443 418,428ZM459,460Q503,534 508,620Q514,531 459,460ZM459,460Q551,486 644,460Q551,475 459,460ZM500,489Q563,570 570,672Q571,567 500,489ZM500,489Q608,519 715,483Q608,510 500,489ZM543,516Q617,610 641,727Q625,606 543,516ZM543,516Q668,550 787,502Q667,540 543,516ZM588,541Q675,639 709,765Q683,634 588,541ZM588,541Q706,570 816,521Q705,560 588,541ZM633,564Q733,647 765,772Q740,642 633,564ZM633,564Q774,593 903,532Q773,584 633,564ZM680,585Q797,668 840,804Q803,663 680,585ZM680,585Q812,602 932,547Q810,592 680,585ZM728,604Q816,679 875,780Q824,672 728,604ZM728,604Q852,623 960,561Q850,615 728,604ZM776,620Q865,681 922,772Q872,674 776,620ZM776,620Q887,630 984,575Q885,621 776,620ZM825,634Q925,685 985,780Q932,678 825,634ZM825,634Q923,640 1007,588Q921,630 825,634ZM875,645Q958,684 1014,757Q964,676 875,645ZM875,645Q967,651 1042,598Q965,643 875,645ZM925,654Q996,685 1049,741Q1001,677 925,654ZM925,654Q1010,659 1077,606Q1007,650 925,654ZM976,660Q1029,676 1067,716Q1033,669 976,660ZM976,660Q1031,659 1076,625Q1028,649 976,660ZM1027,664Q1069,674 1102,704Q1073,667 1027,664ZM1027,664Q1076,668 1110,632Q1072,658 1027,664Z"/><path fill="#6cb435" d="M1573,649L1654,728L1704,746L1762,770L1813,783L1850,781L1896,787L1933,783L1954,767L1977,754L1980,729L1995,713L2014,702L2028,649L2005,641L1996,625L1994,605L1965,599L1960,577L1945,561L1908,558L1877,552L1828,558L1772,570L1725,575L1673,585Z"/><path fill="#808080" fill-opacity=".2" d="M1593,651Q1632,683 1654,728Q1638,678 1593,651ZM1593,651Q1644,631 1673,585Q1638,625 1593,651ZM1626,655Q1672,694 1704,746Q1678,689 1626,655ZM1626,655Q1688,632 1725,575Q1682,623 1626,655ZM1659,658Q1723,703 1762,770Q1729,697 1659,658ZM1659,658Q1730,632 1772,570Q1724,625 1659,658ZM1691,660Q1769,705 1813,783Q1775,699 1691,660ZM1691,660Q1780,636 1828,558Q1775,629 1691,660ZM1724,662Q1802,706 1850,781Q1809,698 1724,662ZM1724,662Q1816,628 1877,552Q1811,621 1724,662ZM1757,664Q1837,714 1896,787Q1844,706 1757,664ZM1757,664Q1854,641 1908,558Q1848,633 1757,664ZM1790,666Q1878,705 1933,783Q1884,697 1790,666ZM1790,666Q1884,638 1945,561Q1878,630 1790,666ZM1823,667Q1902,699 1954,767Q1908,692 1823,667ZM1823,667Q1908,647 1960,577Q1904,640 1823,667ZM1856,668Q1923,702 1977,754Q1928,694 1856,668ZM1856,668Q1926,657 1965,599Q1922,650 1856,668ZM1889,669Q1940,691 1980,729Q1946,682 1889,669ZM1889,669Q1952,653 1994,605Q1946,645 1889,669ZM1922,669Q1962,686 1995,713Q1967,677 1922,669ZM1922,669Q1968,662 1996,625Q1963,654 1922,669ZM1955,669Q1988,679 2014,702Q1992,672 1955,669ZM1955,669Q1987,668 2005,641Q1983,659 1955,669Z"/><path fill="#6cb435" d="M1786,203L1726,97L1674,45L1630,9L1591,-18L1554,-44L1527,-48L1499,-56L1476,-58L1460,-44L1454,-71L1426,-6L1427,20L1427,47L1438,79L1445,112L1494,145L1525,177L1597,201L1670,220Z"/><path fill="#808080" fill-opacity=".2" d="M1768,194Q1738,149 1726,97Q1729,153 1768,194ZM1768,194Q1713,186 1670,220Q1715,194 1768,194ZM1730,175Q1688,116 1674,45Q1681,119 1730,175ZM1730,175Q1658,163 1597,201Q1660,172 1730,175ZM1692,154Q1651,86 1630,9Q1641,90 1692,154ZM1692,154Q1605,141 1525,177Q1606,149 1692,154ZM1656,133Q1600,68 1591,-18Q1592,71 1656,133ZM1656,133Q1573,112 1494,145Q1573,121 1656,133ZM1620,110Q1573,39 1554,-44Q1566,42 1620,110ZM1620,110Q1532,78 1445,112Q1532,88 1620,110ZM1584,86Q1534,28 1527,-48Q1526,32 1584,86ZM1584,86Q1513,57 1438,79Q1512,66 1584,86ZM1550,61Q1507,10 1499,-56Q1498,14 1550,61ZM1550,61Q1490,35 1427,47Q1489,43 1550,61ZM1516,35Q1484,-6 1476,-58Q1475,-2 1516,35ZM1516,35Q1474,13 1427,20Q1472,21 1516,35ZM1483,8Q1466,-15 1460,-44Q1457,-12 1483,8ZM1483,8Q1457,-10 1426,-6Q1455,0 1483,8Z"/><path fill="#6cb435" d="M338,682L376,575L371,529L367,480L353,452L349,402L338,368L323,344L316,300L294,296L278,279L267,248L249,242L233,231L217,220L207,202L165,235L154,250L154,276L137,290L126,310L137,347L140,378L142,408L143,439L153,474L176,515L192,552L219,593L246,631Z"/><path fill="#808080" fill-opacity=".2" d="M331,663Q340,613 376,575Q333,609 331,663ZM331,663Q294,633 246,631Q290,643 331,663ZM319,634Q336,577 371,529Q328,573 319,634ZM319,634Q275,599 219,593Q272,606 319,634ZM308,604Q319,533 367,480Q311,529 308,604ZM308,604Q261,553 192,552Q257,562 308,604ZM297,574Q317,509 353,452Q307,505 297,574ZM297,574Q249,520 176,515Q244,529 297,574ZM287,544Q300,465 349,402Q292,461 287,544ZM287,544Q234,482 153,474Q230,491 287,544ZM276,514Q291,434 338,368Q282,430 276,514ZM276,514Q221,456 143,439Q216,465 276,514ZM266,484Q276,406 323,344Q267,402 266,484ZM266,484Q218,423 142,408Q213,432 266,484ZM256,454Q265,369 316,300Q257,365 256,454ZM256,454Q215,390 140,378Q209,399 256,454ZM247,423Q258,355 294,296Q249,352 247,423ZM247,423Q209,361 137,347Q203,369 247,423ZM237,393Q246,332 278,279Q238,329 237,393ZM237,393Q200,326 126,310Q194,335 237,393ZM228,362Q235,301 267,248Q226,298 228,362ZM228,362Q193,313 137,290Q187,320 228,362ZM219,332Q222,283 249,242Q213,280 219,332ZM219,332Q195,293 154,276Q190,300 219,332ZM211,301Q220,265 233,231Q209,262 211,301ZM211,301Q191,266 154,250Q184,274 211,301ZM202,271Q208,245 217,220Q200,242 202,271ZM202,271Q193,243 165,235Q185,251 202,271Z"/><path fill="#6cb435" d="M128,475L153,368L142,323L133,273L124,218L113,165L96,140L81,102L62,79L47,43L27,34L10,14L-7,-4L-23,-22L-39,-42L-82,-38L-82,-29L-81,-6L-73,24L-79,42L-74,70L-79,91L-81,115L-74,147L-44,198L-33,233L-24,267L2,314L29,362L43,400Z"/><path fill="#808080" fill-opacity=".2" d="M122,456Q128,409 153,368Q119,406 122,456ZM122,456Q94,412 43,400Q88,421 122,456ZM110,421Q120,370 142,323Q110,367 110,421ZM110,421Q83,374 29,362Q78,380 110,421ZM99,387Q107,327 133,273Q96,324 99,387ZM99,387Q61,336 2,314Q56,343 99,387ZM87,352Q87,280 124,218Q77,277 87,352ZM87,352Q43,294 -24,267Q38,301 87,352ZM76,318Q81,238 113,165Q72,236 76,318ZM76,318Q35,258 -33,233Q30,264 76,318ZM64,283Q58,207 96,140Q49,205 64,283ZM64,283Q24,222 -44,198Q18,230 64,283ZM51,249Q51,172 81,102Q42,170 51,249ZM51,249Q6,178 -74,147Q0,184 51,249ZM39,215Q36,144 62,79Q27,143 39,215ZM39,215Q-6,147 -81,115Q-13,155 39,215ZM26,180Q20,109 47,43Q11,108 26,180ZM26,180Q-14,122 -79,91Q-20,128 26,180ZM13,146Q9,89 27,34Q-1,87 13,146ZM13,146Q-20,96 -74,70Q-26,102 13,146ZM0,112Q-6,62 10,14Q-15,61 0,112ZM0,112Q-29,65 -79,42Q-35,73 0,112ZM-13,78Q-19,37 -7,-4Q-27,36 -13,78ZM-13,78Q-30,36 -73,24Q-37,44 -13,78ZM-27,44Q-31,11 -23,-22Q-40,10 -27,44ZM-27,44Q-44,9 -81,-6Q-51,17 -27,44ZM-41,11Q-45,-16 -39,-42Q-54,-16 -41,11ZM-41,11Q-51,-19 -82,-29Q-57,-14 -41,11Z"/><path fill="#6cb435" d="M1789,250L1704,313L1672,352L1640,389L1606,425L1568,461L1546,488L1519,515L1510,534L1483,558L1471,577L1467,592L1441,613L1434,629L1422,645L1338,580L1448,679L1473,672L1500,662L1519,673L1549,659L1578,645L1611,619L1638,620L1670,587L1701,540L1729,496L1756,468L1779,416L1796,352Z"/><path fill="#808080" fill-opacity=".2" d="M1781,268Q1745,296 1704,313Q1749,303 1781,268ZM1781,268Q1772,313 1796,352Q1780,311 1781,268ZM1765,301Q1722,333 1672,352Q1726,341 1765,301ZM1765,301Q1753,361 1779,416Q1761,360 1765,301ZM1747,334Q1701,375 1640,389Q1705,383 1747,334ZM1747,334Q1722,402 1756,468Q1732,402 1747,334ZM1728,365Q1675,411 1606,425Q1680,420 1728,365ZM1728,365Q1700,431 1729,496Q1711,431 1728,365ZM1708,396Q1647,448 1568,461Q1650,455 1708,396ZM1708,396Q1679,467 1701,540Q1687,467 1708,396ZM1687,427Q1625,477 1546,488Q1629,486 1687,427ZM1687,427Q1655,504 1670,587Q1663,505 1687,427ZM1665,456Q1596,495 1519,515Q1600,505 1665,456ZM1665,456Q1616,532 1638,620Q1626,534 1665,456ZM1641,484Q1583,529 1510,534Q1587,538 1641,484ZM1641,484Q1602,546 1611,619Q1612,548 1641,484ZM1616,512Q1554,547 1483,558Q1557,558 1616,512ZM1616,512Q1579,573 1578,645Q1587,576 1616,512ZM1590,538Q1536,572 1471,577Q1538,581 1590,538ZM1590,538Q1547,591 1549,659Q1556,594 1590,538ZM1564,563Q1518,586 1467,592Q1521,596 1564,563ZM1564,563Q1526,612 1519,673Q1534,615 1564,563ZM1536,587Q1491,611 1441,613Q1494,619 1536,587ZM1536,587Q1504,618 1500,662Q1512,622 1536,587ZM1507,611Q1471,624 1434,629Q1474,634 1507,611ZM1507,611Q1476,634 1473,672Q1484,638 1507,611ZM1477,632Q1450,641 1422,645Q1452,649 1477,632ZM1477,632Q1452,649 1448,679Q1459,653 1477,632Z"/><path fill="#6cb435" d="M1142,464L1223,344L1226,286L1231,220L1218,178L1221,105L1195,82L1183,30L1154,18L1131,-4L1112,-38L1083,-29L1062,-44L971,-43L1002,-22L994,-3L980,11L972,33L971,61L970,92L973,126L968,155L975,195L1004,254L1018,302L1047,363Z"/><path fill="#808080" fill-opacity=".2" d="M1140,444Q1171,385 1223,344Q1163,379 1140,444ZM1140,444Q1111,383 1047,363Q1105,391 1140,444ZM1136,404Q1167,335 1226,286Q1159,328 1136,404ZM1136,404Q1099,328 1018,302Q1093,335 1136,404ZM1132,365Q1166,282 1231,220Q1157,277 1132,365ZM1132,365Q1089,286 1004,254Q1082,294 1132,365ZM1126,326Q1154,241 1218,178Q1147,237 1126,326ZM1126,326Q1077,231 975,195Q1070,238 1126,326ZM1120,288Q1145,183 1221,105Q1137,178 1120,288ZM1120,288Q1071,191 968,155Q1064,198 1120,288ZM1113,249Q1137,157 1195,82Q1128,153 1113,249ZM1113,249Q1059,168 973,126Q1054,174 1113,249ZM1105,211Q1129,114 1183,30Q1121,110 1105,211ZM1105,211Q1059,127 970,92Q1052,134 1105,211ZM1096,172Q1111,90 1154,18Q1102,86 1096,172ZM1096,172Q1051,97 971,61Q1045,103 1096,172ZM1086,134Q1088,59 1131,-4Q1080,56 1086,134ZM1086,134Q1048,62 972,33Q1042,69 1086,134ZM1075,96Q1077,25 1112,-38Q1067,22 1075,96ZM1075,96Q1042,38 980,11Q1035,45 1075,96ZM1063,59Q1067,13 1083,-29Q1058,11 1063,59ZM1063,59Q1040,15 994,-3Q1033,23 1063,59ZM1051,21Q1052,-12 1062,-44Q1042,-14 1051,21ZM1051,21Q1038,-13 1002,-22Q1031,-5 1051,21Z"/><path fill="#6cb435" d="M1143,622L1265,629L1310,606L1376,585L1414,559L1456,533L1491,506L1517,478L1529,451L1552,424L1558,399L1571,374L1586,350L1594,327L1581,287L1550,284L1530,279L1504,283L1477,292L1450,296L1420,307L1388,321L1360,322L1325,345L1289,375L1251,416L1212,464L1176,499Z"/><path fill="#808080" fill-opacity=".2" d="M1159,610Q1214,607 1265,629Q1216,598 1159,610ZM1159,610Q1193,558 1176,499Q1182,557 1159,610ZM1191,588Q1252,587 1310,606Q1253,578 1191,588ZM1191,588Q1221,529 1212,464Q1212,528 1191,588ZM1222,566Q1301,561 1376,585Q1302,551 1222,566ZM1222,566Q1266,496 1251,416Q1256,495 1222,566ZM1252,543Q1335,533 1414,559Q1336,524 1252,543ZM1252,543Q1292,464 1289,375Q1283,462 1252,543ZM1283,520Q1372,499 1456,533Q1372,490 1283,520ZM1283,520Q1327,438 1325,345Q1317,436 1283,520ZM1314,498Q1404,473 1491,506Q1404,464 1314,498ZM1314,498Q1360,416 1360,322Q1352,414 1314,498ZM1345,475Q1431,457 1517,478Q1432,447 1345,475ZM1345,475Q1390,405 1388,321Q1381,402 1345,475ZM1376,452Q1452,436 1529,451Q1452,427 1376,452ZM1376,452Q1424,387 1420,307Q1414,385 1376,452ZM1406,429Q1478,410 1552,424Q1478,402 1406,429ZM1406,429Q1449,369 1450,296Q1439,366 1406,429ZM1437,406Q1497,394 1558,399Q1496,384 1437,406ZM1437,406Q1480,357 1477,292Q1471,354 1437,406ZM1467,383Q1518,364 1571,374Q1517,355 1467,383ZM1467,383Q1504,340 1504,283Q1495,336 1467,383ZM1498,360Q1541,349 1586,350Q1540,338 1498,360ZM1498,360Q1530,325 1530,279Q1522,322 1498,360ZM1528,336Q1560,326 1594,327Q1559,315 1528,336ZM1528,336Q1551,315 1550,284Q1542,311 1528,336Z"/><path fill="#6cb435" d="M992,895L971,763L942,725L909,647L882,633L852,591L822,545L799,549L773,531L753,538L732,532L712,528L695,521L670,570L658,588L645,607L646,634L668,668L658,694L705,735L704,764L748,802L798,838L858,873Z"/><path fill="#808080" fill-opacity=".2" d="M978,880Q958,823 971,763Q948,823 978,880ZM978,880Q919,854 858,873Q919,863 978,880ZM951,853Q937,790 942,725Q928,790 951,853ZM951,853Q877,818 798,838Q877,826 951,853ZM925,826Q891,739 909,647Q882,740 925,826ZM925,826Q840,787 748,802Q839,797 925,826ZM899,798Q877,717 882,633Q869,718 899,798ZM899,798Q808,741 704,764Q807,749 899,798ZM873,770Q835,684 852,591Q825,685 873,770ZM873,770Q795,724 705,735Q793,733 873,770ZM847,742Q802,648 822,545Q793,649 847,742ZM847,742Q760,690 658,694Q757,700 847,742ZM822,713Q786,635 799,549Q777,636 822,713ZM822,713Q753,663 668,668Q751,672 822,713ZM797,684Q769,610 773,531Q760,612 797,684ZM797,684Q732,629 646,634Q728,639 797,684ZM773,655Q754,598 753,538Q744,600 773,655ZM773,655Q719,603 645,607Q716,613 773,655ZM749,626Q732,580 732,532Q724,582 749,626ZM749,626Q711,587 658,588Q708,596 749,626ZM725,596Q710,563 712,528Q702,565 725,596ZM725,596Q702,573 670,570Q698,581 725,596Z"/><path fill="#6cb435" d="M119,185L229,249L282,259L344,276L386,280L433,288L477,293L527,303L533,284L568,285L585,275L601,265L631,265L633,247L655,242L675,259L659,188L649,173L646,154L635,136L609,123L577,113L544,104L532,82L483,82L444,76L407,70L350,78L287,94L221,115Z"/><path fill="#808080" fill-opacity=".2" d="M139,184Q191,208 229,249Q196,201 139,184ZM139,184Q195,168 221,115Q189,161 139,184ZM175,183Q238,207 282,259Q244,199 175,183ZM175,183Q248,160 287,94Q242,152 175,183ZM210,182Q290,211 344,276Q296,202 210,182ZM210,182Q294,149 350,78Q289,142 210,182ZM245,182Q328,213 386,280Q334,205 245,182ZM245,182Q344,152 407,70Q339,145 245,182ZM281,182Q371,215 433,288Q376,208 281,182ZM281,182Q383,160 444,76Q378,152 281,182ZM316,183Q413,213 477,293Q418,206 316,183ZM316,183Q413,154 483,82Q408,146 316,183ZM352,184Q451,226 527,303Q457,217 352,184ZM352,184Q458,163 532,82Q454,154 352,184ZM387,186Q469,222 533,284Q475,214 387,186ZM387,186Q483,179 544,104Q479,170 387,186ZM422,188Q506,221 568,285Q511,213 422,188ZM422,188Q514,180 577,113Q510,172 422,188ZM458,191Q527,224 585,275Q533,216 458,191ZM458,191Q547,188 609,123Q543,179 458,191ZM493,194Q557,215 601,265Q562,208 493,194ZM493,194Q574,188 635,136Q570,179 493,194ZM528,198Q587,220 631,265Q592,212 528,198ZM528,198Q597,202 646,154Q594,193 528,198ZM564,202Q601,221 633,247Q606,213 564,202ZM564,202Q612,203 649,173Q609,196 564,202ZM599,206Q630,220 655,242Q634,213 599,206ZM599,206Q633,210 659,188Q631,202 599,206Z"/><path fill="#6cb435" d="M1046,73L938,49L887,63L843,81L795,100L744,120L716,146L670,170L636,197L625,223L623,248L600,274L596,297L583,320L627,406L616,354L635,353L658,344L675,350L704,333L727,330L754,319L790,293L816,287L861,248L903,214L937,199L984,160Z"/><path fill="#808080" fill-opacity=".2" d="M1027,80Q981,70 938,49Q978,79 1027,80ZM1027,80Q990,112 984,160Q998,116 1027,80ZM992,94Q936,92 887,63Q933,101 992,94ZM992,94Q945,136 937,199Q952,140 992,94ZM957,109Q896,111 843,81Q894,121 957,109ZM957,109Q914,153 903,214Q922,157 957,109ZM923,125Q856,127 795,100Q854,137 923,125ZM923,125Q872,176 861,248Q880,181 923,125ZM889,142Q814,145 744,120Q813,155 889,142ZM889,142Q823,200 816,287Q832,204 889,142ZM856,160Q784,173 716,146Q783,184 856,160ZM856,160Q800,215 790,293Q808,219 856,160ZM823,179Q745,194 670,170Q745,202 823,179ZM823,179Q758,234 754,319Q768,238 823,179ZM791,198Q713,211 636,197Q713,220 791,198ZM791,198Q732,251 727,330Q741,255 791,198ZM759,219Q692,233 625,223Q693,244 759,219ZM759,219Q707,264 704,333Q715,268 759,219ZM727,240Q676,254 623,248Q677,264 727,240ZM727,240Q678,284 675,350Q688,288 727,240ZM696,262Q650,282 600,274Q651,290 696,262ZM696,262Q660,295 658,344Q669,299 696,262ZM666,284Q632,297 596,297Q634,305 666,284ZM666,284Q636,312 635,353Q646,316 666,284ZM637,308Q611,318 583,320Q612,326 637,308ZM637,308Q615,326 616,354Q622,329 637,308Z"/><path fill="#6cb435" d="M1474,728L1374,661L1305,647L1237,639L1189,648L1143,660L1111,681L1081,703L1071,731L1057,756L1056,782L1036,801L1045,883L1063,871L1077,885L1098,891L1111,909L1135,914L1172,904L1190,921L1230,908L1275,890L1338,848L1382,832Z"/><path fill="#808080" fill-opacity=".2" d="M1454,730Q1408,702 1374,661Q1403,708 1454,730ZM1454,730Q1402,770 1382,832Q1408,774 1454,730ZM1419,735Q1352,703 1305,647Q1347,710 1419,735ZM1419,735Q1362,780 1338,848Q1369,784 1419,735ZM1383,740Q1301,703 1237,639Q1296,711 1383,740ZM1383,740Q1299,793 1275,890Q1307,799 1383,740ZM1348,747Q1255,720 1189,648Q1250,727 1348,747ZM1348,747Q1264,809 1230,908Q1271,814 1348,747ZM1313,754Q1216,728 1143,660Q1211,738 1313,754ZM1313,754Q1219,813 1190,921Q1226,818 1313,754ZM1279,762Q1186,740 1111,681Q1182,749 1279,762ZM1279,762Q1202,815 1172,904Q1209,821 1279,762ZM1244,771Q1152,762 1081,703Q1148,771 1244,771ZM1244,771Q1166,825 1135,914Q1175,831 1244,771ZM1210,781Q1135,772 1071,731Q1132,780 1210,781ZM1210,781Q1136,826 1111,909Q1144,832 1210,781ZM1176,791Q1114,782 1057,756Q1111,791 1176,791ZM1176,791Q1119,828 1098,891Q1127,833 1176,791ZM1142,802Q1097,799 1056,782Q1095,807 1142,802ZM1142,802Q1094,832 1077,885Q1101,837 1142,802ZM1108,815Q1071,815 1036,801Q1069,825 1108,815ZM1108,815Q1074,833 1063,871Q1082,840 1108,815Z"/><path fill="#6cb435" d="M1409,51L1329,134L1305,197L1285,258L1284,303L1288,343L1288,387L1302,414L1336,415L1349,438L1366,459L1412,447L1431,429L1461,424L1486,403L1494,357L1510,322L1518,276L1506,211L1476,133Z"/><path fill="#808080" fill-opacity=".2" d="M1408,71Q1372,107 1329,134Q1378,115 1408,71ZM1408,71Q1429,117 1476,133Q1435,111 1408,71ZM1407,112Q1368,169 1305,197Q1374,177 1407,112ZM1407,112Q1434,184 1506,211Q1441,176 1407,112ZM1405,152Q1352,213 1285,258Q1359,221 1405,152ZM1405,152Q1439,235 1518,276Q1445,229 1405,152ZM1402,192Q1352,257 1284,303Q1359,265 1402,192ZM1402,192Q1428,280 1510,322Q1435,275 1402,192ZM1399,232Q1360,304 1288,343Q1366,310 1399,232ZM1399,232Q1426,310 1494,357Q1434,304 1399,232ZM1396,272Q1358,345 1288,387Q1365,351 1396,272ZM1396,272Q1413,356 1486,403Q1421,351 1396,272ZM1393,312Q1361,375 1302,414Q1369,382 1393,312ZM1393,312Q1409,379 1461,424Q1416,375 1393,312ZM1389,352Q1369,389 1336,415Q1377,396 1389,352ZM1389,352Q1392,401 1431,429Q1401,396 1389,352ZM1385,392Q1371,418 1349,438Q1378,424 1385,392ZM1385,392Q1389,425 1412,447Q1397,420 1385,392Z"/><path fill="#6cb435" d="M202,501L316,498L379,470L431,437L489,401L535,363L557,326L573,290L595,254L582,229L592,198L586,175L529,100L544,146L523,154L505,147L481,163L457,173L432,186L403,209L368,251L329,300L294,332L249,391Z"/><path fill="#808080" fill-opacity=".2" d="M219,490Q268,487 316,498Q269,477 219,490ZM219,490Q257,447 249,391Q248,444 219,490ZM254,465Q317,453 379,470Q317,443 254,465ZM254,465Q303,408 294,332Q294,405 254,465ZM288,440Q359,424 431,437Q359,414 288,440ZM288,440Q330,376 329,300Q322,374 288,440ZM321,414Q404,386 489,401Q403,377 321,414ZM321,414Q379,342 368,251Q370,340 321,414ZM354,386Q442,357 535,363Q441,349 354,386ZM354,386Q411,307 403,209Q402,304 354,386ZM386,358Q468,321 557,326Q466,313 386,358ZM386,358Q445,282 432,186Q437,280 386,358ZM417,329Q491,295 573,290Q489,286 417,329ZM417,329Q459,256 457,173Q450,254 417,329ZM446,298Q516,260 595,254Q514,252 446,298ZM446,298Q490,237 481,163Q480,235 446,298ZM475,267Q524,235 582,229Q521,227 475,267ZM475,267Q508,212 505,147Q499,209 475,267ZM503,235Q543,205 592,198Q539,197 503,235ZM503,235Q527,198 523,154Q518,195 503,235ZM530,202Q557,187 586,175Q553,178 530,202ZM530,202Q552,177 544,146Q542,175 530,202Z"/><path fill="#6cb435" d="M966,269L924,404L929,483L946,537L965,589L987,634L1012,673L1037,708L1065,712L1091,719L1115,719L1172,715L1177,696L1184,674L1191,651L1216,638L1206,599L1206,566L1178,514L1166,472L1128,413L1073,346Z"/><path fill="#808080" fill-opacity=".2" d="M973,288Q957,350 924,404Q964,353 973,288ZM973,288Q1010,340 1073,346Q1014,333 973,288ZM987,329Q982,415 929,483Q990,418 987,329ZM987,329Q1040,400 1128,413Q1045,392 987,329ZM1001,370Q996,461 946,537Q1004,464 1001,370ZM1001,370Q1062,455 1166,472Q1068,446 1001,370ZM1016,410Q1015,506 965,589Q1023,509 1016,410ZM1016,410Q1082,487 1178,514Q1088,478 1016,410ZM1032,451Q1035,549 987,634Q1045,551 1032,451ZM1032,451Q1096,543 1206,566Q1101,535 1032,451ZM1048,491Q1053,587 1012,673Q1061,588 1048,491ZM1048,491Q1107,575 1206,599Q1112,567 1048,491ZM1064,531Q1072,623 1037,708Q1083,624 1064,531ZM1064,531Q1124,607 1216,638Q1129,600 1064,531ZM1081,570Q1086,642 1065,712Q1096,643 1081,570ZM1081,570Q1122,630 1191,651Q1127,623 1081,570ZM1099,610Q1108,665 1091,719Q1117,666 1099,610ZM1099,610Q1130,656 1184,674Q1137,648 1099,610ZM1117,649Q1120,684 1115,719Q1129,684 1117,649ZM1117,649Q1140,682 1177,696Q1145,675 1117,649Z"/><path fill="#6cb435" d="M1331,810L1286,710L1244,665L1205,633L1165,596L1130,575L1096,557L1066,545L1040,542L1022,555L1000,556L977,552L959,549L948,593L952,614L966,637L966,660L982,686L990,712L1025,737L1074,760L1121,783L1166,804L1221,821Z"/><path fill="#808080" fill-opacity=".2" d="M1314,800Q1293,757 1286,710Q1285,759 1314,800ZM1314,800Q1263,791 1221,821Q1265,799 1314,800ZM1282,781Q1249,727 1244,665Q1240,730 1282,781ZM1282,781Q1220,772 1166,804Q1221,779 1282,781ZM1250,762Q1209,704 1205,633Q1199,707 1250,762ZM1250,762Q1182,749 1121,783Q1183,759 1250,762ZM1218,743Q1178,674 1165,596Q1169,677 1218,743ZM1218,743Q1143,723 1074,760Q1144,733 1218,743ZM1187,723Q1140,656 1130,575Q1130,660 1187,723ZM1187,723Q1103,696 1025,737Q1104,704 1187,723ZM1155,703Q1106,638 1096,557Q1098,641 1155,703ZM1155,703Q1071,679 990,712Q1072,687 1155,703ZM1124,683Q1081,620 1066,545Q1072,624 1124,683ZM1124,683Q1053,654 982,686Q1053,663 1124,683ZM1093,663Q1056,607 1040,542Q1048,611 1093,663ZM1093,663Q1030,634 966,660Q1030,645 1093,663ZM1063,642Q1033,603 1022,555Q1024,607 1063,642ZM1063,642Q1015,619 966,637Q1015,630 1063,642ZM1032,621Q1011,591 1000,556Q1004,594 1032,621ZM1032,621Q994,598 952,614Q993,609 1032,621ZM1002,600Q986,578 977,552Q978,582 1002,600ZM1002,600Q976,584 948,593Q975,592 1002,600Z"/><path fill="#6cb435" d="M593,1051L623,942L625,881L617,842L615,789L609,744L604,696L588,684L577,658L571,610L556,599L548,563L534,550L521,536L507,533L497,513L482,502L454,525L446,540L442,561L438,582L423,591L427,624L427,652L431,686L430,714L433,746L452,795L448,821L465,866L498,925L515,968Z"/><path fill="#808080" fill-opacity=".2" d="M588,1031Q597,983 623,942Q589,980 588,1031ZM588,1031Q562,987 515,968Q556,994 588,1031ZM580,998Q591,935 625,881Q581,931 580,998ZM580,998Q551,948 498,925Q545,955 580,998ZM572,966Q582,899 617,842Q575,896 572,966ZM572,966Q538,895 465,866Q532,901 572,966ZM565,933Q574,856 615,789Q566,853 565,933ZM565,933Q528,854 448,821Q521,862 565,933ZM557,900Q559,814 609,744Q551,811 557,900ZM557,900Q525,827 452,795Q518,834 557,900ZM549,867Q549,773 604,696Q540,770 549,867ZM549,867Q507,791 433,746Q501,797 549,867ZM542,834Q545,753 588,684Q537,751 542,834ZM542,834Q511,751 430,714Q504,757 542,834ZM534,802Q543,726 577,658Q535,723 534,802ZM534,802Q499,729 431,686Q491,736 534,802ZM527,769Q529,684 571,610Q521,681 527,769ZM527,769Q494,695 427,652Q486,702 527,769ZM519,736Q528,665 556,599Q519,662 519,736ZM519,736Q489,667 427,624Q481,673 519,736ZM512,703Q516,630 548,563Q508,627 512,703ZM512,703Q491,629 423,591Q483,635 512,703ZM505,670Q511,607 534,550Q501,605 505,670ZM505,670Q488,613 438,582Q480,620 505,670ZM498,637Q500,584 521,536Q492,582 498,637ZM498,637Q482,590 442,561Q476,595 498,637ZM492,604Q491,567 507,533Q481,564 492,604ZM492,604Q481,564 446,540Q472,570 492,604ZM485,571Q486,541 497,513Q478,539 485,571ZM485,571Q480,540 454,525Q472,546 485,571Z"/><path fill="#6cb435" d="M707,185L655,296L651,362L659,411L665,472L680,515L700,546L721,576L745,594L767,618L793,615L815,624L835,629L912,623L896,609L899,590L915,578L924,560L927,537L920,507L912,475L919,453L899,411L869,364L837,314L815,270Z"/><path fill="#808080" fill-opacity=".2" d="M712,204Q694,256 655,296Q703,262 712,204ZM712,204Q753,253 815,270Q757,246 712,204ZM720,238Q697,306 651,362Q704,311 720,238ZM720,238Q763,301 837,314Q768,293 720,238ZM729,272Q705,347 659,411Q713,351 729,272ZM729,272Q785,339 869,364Q790,332 729,272ZM738,306Q721,398 665,472Q731,402 738,306ZM738,306Q798,391 899,411Q803,382 738,306ZM748,340Q730,434 680,515Q740,437 748,340ZM748,340Q812,429 919,453Q817,422 748,340ZM759,373Q750,466 700,546Q759,469 759,373ZM759,373Q817,452 912,475Q821,445 759,373ZM771,406Q770,498 721,576Q777,501 771,406ZM771,406Q827,484 920,507Q833,475 771,406ZM783,439Q788,522 745,594Q797,525 783,439ZM783,439Q836,516 927,537Q842,507 783,439ZM796,472Q800,549 767,618Q809,550 796,472ZM796,472Q845,538 924,560Q850,531 796,472ZM810,504Q814,562 793,615Q825,563 810,504ZM810,504Q846,564 915,578Q852,556 810,504ZM824,536Q827,581 815,624Q836,582 824,536ZM824,536Q850,580 899,590Q855,572 824,536ZM839,568Q841,599 835,629Q849,600 839,568ZM839,568Q859,601 896,609Q864,594 839,568Z"/><path fill="#6cb435" d="M-101,825L-11,874L47,885L94,888L132,884L173,882L224,885L253,874L266,857L295,848L317,836L328,820L342,807L360,795L370,766L352,746L338,735L317,728L295,722L287,703L257,701L232,694L199,694L164,695L115,711L74,720L24,739L-25,757Z"/><path fill="#808080" fill-opacity=".2" d="M-81,822Q-41,841 -11,874Q-36,834 -81,822ZM-81,822Q-42,799 -25,757Q-49,793 -81,822ZM-49,819Q7,840 47,885Q12,833 -49,819ZM-49,819Q3,793 24,739Q-3,787 -49,819ZM-16,815Q47,839 94,888Q52,832 -16,815ZM-16,815Q44,782 74,720Q38,776 -16,815ZM16,811Q81,836 132,884Q85,829 16,811ZM16,811Q79,774 115,711Q73,768 16,811ZM49,807Q117,835 173,882Q122,827 49,807ZM49,807Q129,775 164,695Q122,768 49,807ZM81,804Q163,826 224,885Q168,817 81,804ZM81,804Q159,769 199,694Q152,761 81,804ZM113,800Q194,817 253,874Q199,808 113,800ZM113,800Q187,763 232,694Q182,757 113,800ZM146,796Q213,812 266,857Q218,804 146,796ZM146,796Q215,764 257,701Q209,757 146,796ZM178,792Q243,807 295,848Q246,799 178,792ZM178,792Q246,764 287,703Q240,757 178,792ZM211,788Q270,800 317,836Q274,790 211,788ZM211,788Q265,770 295,722Q258,762 211,788ZM243,784Q288,797 328,820Q291,789 243,784ZM243,784Q292,771 317,728Q286,763 243,784ZM276,780Q311,788 342,807Q315,779 276,780ZM276,780Q315,769 338,735Q309,761 276,780ZM308,776Q335,783 360,795Q338,774 308,776ZM308,776Q338,772 352,746Q332,764 308,776Z"/><path fill="#6cb435" d="M512,249L568,183L590,138L598,104L614,61L609,39L600,22L594,3L581,-6L569,-13L556,-27L532,-16L516,-18L504,-4L490,9L471,14L465,45L461,79L468,129L470,169Z"/><path fill="#808080" fill-opacity=".2" d="M514,229Q538,203 568,183Q532,196 514,229ZM514,229Q502,192 470,169Q495,197 514,229ZM517,203Q545,160 590,138Q539,154 517,203ZM517,203Q510,155 468,129Q502,160 517,203ZM521,177Q548,129 598,104Q543,123 521,177ZM521,177Q511,115 461,79Q503,120 521,177ZM524,150Q557,93 614,61Q549,86 524,150ZM524,150Q511,89 465,45Q502,93 524,150ZM528,124Q556,70 609,39Q549,64 528,124ZM528,124Q521,58 471,14Q513,62 528,124ZM532,98Q561,55 600,22Q555,50 532,98ZM532,98Q530,45 490,9Q522,48 532,98ZM536,72Q558,31 594,3Q551,25 536,72ZM536,72Q534,28 504,-4Q525,32 536,72ZM540,46Q559,18 581,-6Q551,12 540,46ZM540,46Q540,9 516,-18Q531,12 540,46ZM544,19Q557,4 569,-13Q549,-3 544,19ZM544,19Q547,-1 532,-16Q539,1 544,19Z"/><path fill="#6cb435" d="M1300,11L1334,92L1354,122L1371,138L1389,161L1409,197L1422,207L1436,220L1447,221L1461,238L1469,231L1479,235L1489,238L1482,261L1517,224L1519,212L1522,200L1513,181L1523,169L1505,147L1499,129L1487,109L1474,89L1436,66L1410,46L1379,27Z"/><path fill="#808080" fill-opacity=".2" d="M1316,24Q1328,57 1334,92Q1336,55 1316,24ZM1316,24Q1347,39 1379,27Q1347,31 1316,24ZM1333,38Q1349,79 1354,122Q1360,76 1333,38ZM1333,38Q1370,58 1410,46Q1371,48 1333,38ZM1349,53Q1369,93 1371,138Q1377,91 1349,53ZM1349,53Q1390,76 1436,66Q1392,66 1349,53ZM1366,68Q1384,113 1389,161Q1394,110 1366,68ZM1366,68Q1416,97 1474,89Q1418,89 1366,68ZM1382,83Q1407,138 1409,197Q1415,135 1382,83ZM1382,83Q1429,117 1487,109Q1431,108 1382,83ZM1397,99Q1424,150 1422,207Q1432,148 1397,99ZM1397,99Q1443,132 1499,129Q1446,122 1397,99ZM1412,116Q1434,166 1436,220Q1443,164 1412,116ZM1412,116Q1452,150 1505,147Q1455,140 1412,116ZM1427,132Q1447,174 1447,221Q1455,173 1427,132ZM1427,132Q1469,166 1523,169Q1472,158 1427,132ZM1441,149Q1460,191 1461,238Q1469,189 1441,149ZM1441,149Q1472,177 1513,181Q1476,168 1441,149ZM1455,167Q1466,198 1469,231Q1475,196 1455,167ZM1455,167Q1481,197 1522,200Q1485,190 1455,167ZM1469,184Q1476,209 1479,235Q1485,207 1469,184ZM1469,184Q1487,211 1519,212Q1492,202 1469,184ZM1481,202Q1484,220 1489,238Q1495,218 1481,202ZM1481,202Q1493,223 1517,224Q1498,215 1481,202Z"/><path fill="#6cb435" d="M386,677L465,644L489,617L528,587L552,560L556,539L556,519L553,502L552,485L547,470L556,459L513,439L494,447L474,444L452,446L428,453L406,474L387,506L373,546L367,597Z"/><path fill="#808080" fill-opacity=".2" d="M395,659Q429,644 465,644Q427,635 395,659ZM395,659Q397,621 367,597Q388,625 395,659ZM408,636Q448,623 489,617Q445,614 408,636ZM408,636Q406,585 373,546Q397,589 408,636ZM420,613Q472,593 528,587Q470,583 420,613ZM420,613Q423,553 387,506Q414,556 420,613ZM434,590Q490,564 552,560Q487,554 434,590ZM434,590Q446,526 406,474Q437,528 434,590ZM447,568Q498,538 556,539Q495,529 447,568ZM447,568Q455,507 428,453Q445,509 447,568ZM462,546Q507,526 556,519Q505,517 462,546ZM462,546Q476,494 452,446Q466,495 462,546ZM477,524Q513,506 553,502Q510,497 477,524ZM477,524Q491,484 474,444Q482,484 477,524ZM493,503Q522,492 552,485Q519,483 493,503ZM493,503Q508,475 494,447Q498,475 493,503ZM509,482Q527,474 547,470Q525,466 509,482ZM509,482Q522,462 513,439Q512,461 509,482Z"/><path fill="#6cb435" d="M1272,360L1236,431L1232,474L1234,512L1234,556L1248,575L1259,601L1265,637L1280,652L1297,659L1311,673L1324,685L1363,684L1362,675L1361,654L1375,646L1378,627L1373,600L1382,583L1371,551L1370,525L1358,491L1338,451L1330,420Z"/><path fill="#808080" fill-opacity=".2" d="M1275,380Q1257,407 1236,431Q1265,413 1275,380ZM1275,380Q1292,415 1330,420Q1298,406 1275,380ZM1279,407Q1260,443 1232,474Q1266,448 1279,407ZM1279,407Q1298,443 1338,451Q1303,436 1279,407ZM1284,434Q1264,476 1234,512Q1273,482 1284,434ZM1284,434Q1312,475 1358,491Q1317,468 1284,434ZM1288,461Q1272,515 1234,556Q1282,520 1288,461ZM1288,461Q1316,510 1370,525Q1322,503 1288,461ZM1294,488Q1277,535 1248,575Q1286,540 1294,488ZM1294,488Q1319,535 1371,551Q1324,529 1294,488ZM1299,515Q1289,562 1259,601Q1297,566 1299,515ZM1299,515Q1328,564 1382,583Q1335,556 1299,515ZM1305,541Q1298,595 1265,637Q1307,599 1305,541ZM1305,541Q1328,583 1373,600Q1334,576 1305,541ZM1312,568Q1300,611 1280,652Q1309,615 1312,568ZM1312,568Q1332,612 1378,627Q1337,606 1312,568ZM1319,594Q1313,628 1297,659Q1321,631 1319,594ZM1319,594Q1335,633 1375,646Q1341,626 1319,594ZM1326,621Q1320,647 1311,673Q1330,650 1326,621ZM1326,621Q1335,646 1361,654Q1342,639 1326,621ZM1333,647Q1328,666 1324,685Q1338,668 1333,647ZM1333,647Q1340,669 1362,675Q1345,663 1333,647Z"/><path fill="#6cb435" d="M97,675L86,756L95,782L99,819L107,848L120,858L127,886L134,914L147,923L157,940L168,950L180,959L192,962L204,964L214,976L224,982L221,999L268,969L270,955L272,939L282,928L284,912L282,892L282,874L289,858L277,834L257,809L245,786L243,767L219,743L200,721L176,699Z"/><path fill="#808080" fill-opacity=".2" d="M108,692Q99,725 86,756Q109,728 108,692ZM108,692Q140,711 176,699Q141,702 108,692ZM118,709Q111,747 95,782Q119,750 118,709ZM118,709Q157,731 200,721Q158,720 118,709ZM129,726Q124,776 99,819Q132,778 129,726ZM129,726Q171,751 219,743Q172,743 129,726ZM139,743Q137,800 107,848Q146,802 139,743ZM139,743Q186,776 243,767Q189,766 139,743ZM149,761Q147,813 120,858Q156,816 149,761ZM149,761Q192,793 245,786Q194,785 149,761ZM159,778Q154,836 127,886Q162,838 159,778ZM159,778Q202,813 257,809Q205,805 159,778ZM168,796Q165,859 134,914Q175,862 168,796ZM168,796Q214,839 277,834Q217,831 168,796ZM177,814Q172,872 147,923Q180,874 177,814ZM177,814Q224,858 289,858Q228,848 177,814ZM186,832Q179,888 157,940Q188,891 186,832ZM186,832Q228,868 282,874Q232,859 186,832ZM195,850Q192,903 168,950Q201,905 195,850ZM195,850Q230,888 282,892Q234,880 195,850ZM203,869Q198,916 180,959Q208,918 203,869ZM203,869Q234,907 284,912Q239,900 203,869ZM211,887Q210,927 192,962Q220,929 211,887ZM211,887Q237,925 282,928Q242,915 211,887ZM219,906Q215,936 204,964Q223,938 219,906ZM219,906Q239,933 272,939Q243,926 219,906ZM226,925Q223,951 214,976Q232,953 226,925ZM226,925Q242,948 270,955Q247,941 226,925ZM233,943Q230,963 224,982Q238,965 233,943ZM233,943Q245,964 268,969Q251,956 233,943Z"/><path fill="#6cb435" d="M1000,251L937,257L891,272L867,289L842,306L811,323L795,340L787,357L774,374L770,389L766,404L758,410L784,431L799,435L820,428L840,427L859,434L885,416L909,404L935,376L960,352L984,316Z"/><path fill="#808080" fill-opacity=".2" d="M985,264Q961,262 937,257Q960,270 985,264ZM985,264Q972,290 984,316Q982,290 985,264ZM965,281Q927,283 891,272Q926,291 965,281ZM965,281Q945,315 960,352Q956,316 965,281ZM945,297Q905,300 867,289Q904,310 945,297ZM945,297Q923,335 935,376Q933,336 945,297ZM924,313Q882,318 842,306Q881,328 924,313ZM924,313Q901,356 909,404Q912,358 924,313ZM903,329Q856,336 811,323Q856,346 903,329ZM903,329Q878,369 885,416Q886,371 903,329ZM883,344Q839,346 795,340Q838,356 883,344ZM883,344Q855,385 859,434Q863,387 883,344ZM861,360Q824,366 787,357Q824,376 861,360ZM861,360Q836,389 840,427Q846,392 861,360ZM840,375Q807,380 774,374Q807,389 840,375ZM840,375Q819,397 820,428Q827,400 840,375ZM819,389Q794,390 770,389Q794,399 819,389ZM819,389Q797,407 799,435Q805,410 819,389ZM797,403Q781,404 766,404Q782,414 797,403ZM797,403Q782,413 784,431Q791,417 797,403Z"/><path fill="#6cb435" d="M872,788L865,707L850,660L833,632L814,600L796,590L775,564L755,547L741,557L721,544L710,555L695,550L683,554L644,581L657,581L658,591L665,603L661,613L663,625L673,639L671,651L686,668L713,688L743,710L764,730L792,752Z"/><path fill="#808080" fill-opacity=".2" d="M861,771Q856,739 865,707Q847,738 861,771ZM861,771Q830,748 792,752Q828,757 861,771ZM848,754Q841,706 850,660Q833,706 848,754ZM848,754Q811,726 764,730Q808,734 848,754ZM835,736Q823,684 833,632Q814,684 835,736ZM835,736Q794,706 743,710Q791,716 835,736ZM821,719Q808,660 814,600Q799,661 821,719ZM821,719Q773,684 713,688Q770,692 821,719ZM807,702Q791,647 796,590Q780,648 807,702ZM807,702Q752,666 686,668Q750,674 807,702ZM793,686Q777,626 775,564Q767,627 793,686ZM793,686Q739,642 671,651Q737,650 793,686ZM779,669Q757,610 755,547Q747,612 779,669ZM779,669Q731,636 673,639Q729,645 779,669ZM764,653Q747,607 741,557Q737,609 764,653ZM764,653Q718,623 663,625Q715,633 764,653ZM748,638Q728,593 721,544Q719,595 748,638ZM748,638Q709,610 661,613Q707,619 748,638ZM733,623Q717,590 710,555Q707,594 733,623ZM733,623Q703,597 665,603Q701,605 733,623ZM717,608Q701,580 695,550Q693,583 717,608ZM717,608Q691,587 658,591Q689,595 717,608ZM701,593Q691,574 683,554Q682,578 701,593ZM701,593Q681,578 657,581Q679,585 701,593Z"/><path fill="#6cb435" d="M1477,273L1509,359L1534,383L1562,420L1586,438L1609,452L1633,472L1658,493L1675,491L1693,493L1706,487L1723,492L1738,494L1755,489L1758,462L1758,448L1758,434L1755,417L1745,400L1738,382L1708,363L1701,345L1676,326L1638,309L1598,292L1561,277Z"/><path fill="#808080" fill-opacity=".2" d="M1493,285Q1506,321 1509,359Q1515,319 1493,285ZM1493,285Q1529,298 1561,277Q1528,288 1493,285ZM1514,300Q1536,339 1534,383Q1544,337 1514,300ZM1514,300Q1557,309 1598,292Q1556,300 1514,300ZM1535,315Q1564,364 1562,420Q1574,361 1535,315ZM1535,315Q1588,331 1638,309Q1587,322 1535,315ZM1556,330Q1584,381 1586,438Q1592,378 1556,330ZM1556,330Q1617,353 1676,326Q1616,342 1556,330ZM1577,345Q1603,395 1609,452Q1613,392 1577,345ZM1577,345Q1639,365 1701,345Q1639,357 1577,345ZM1597,361Q1627,413 1633,472Q1636,410 1597,361ZM1597,361Q1652,381 1708,363Q1653,371 1597,361ZM1618,376Q1649,431 1658,493Q1657,428 1618,376ZM1618,376Q1677,405 1738,382Q1677,396 1618,376ZM1639,392Q1671,436 1675,491Q1681,433 1639,392ZM1639,392Q1690,417 1745,400Q1691,408 1639,392ZM1659,407Q1682,448 1693,493Q1692,444 1659,407ZM1659,407Q1705,430 1755,417Q1706,422 1659,407ZM1680,423Q1697,454 1706,487Q1706,450 1680,423ZM1680,423Q1717,447 1758,434Q1718,439 1680,423ZM1700,439Q1716,463 1723,492Q1725,459 1700,439ZM1700,439Q1727,455 1758,448Q1729,445 1700,439ZM1721,455Q1730,474 1738,494Q1737,471 1721,455ZM1721,455Q1738,467 1758,462Q1739,458 1721,455Z"/><path fill="#6cb435" d="M176,67L101,73L65,90L33,107L3,124L-13,142L-25,159L-26,175L-29,190L-36,198L-10,217L7,220L22,233L43,237L72,219L100,202L129,167L156,136Z"/><path fill="#808080" fill-opacity=".2" d="M160,80Q130,80 101,73Q129,91 160,80ZM160,80Q146,107 156,136Q154,107 160,80ZM139,97Q102,96 65,90Q101,106 139,97ZM139,97Q123,130 129,167Q131,131 139,97ZM118,113Q75,116 33,107Q74,126 118,113ZM118,113Q92,154 100,202Q100,156 118,113ZM96,129Q49,132 3,124Q48,142 96,129ZM96,129Q65,169 72,219Q74,172 96,129ZM74,145Q30,149 -13,142Q30,158 74,145ZM74,145Q40,185 43,237Q49,188 74,145ZM51,160Q13,165 -25,159Q13,173 51,160ZM51,160Q20,190 22,233Q28,193 51,160ZM28,175Q1,177 -26,175Q1,186 28,175ZM28,175Q6,192 7,220Q14,195 28,175ZM5,190Q-12,191 -29,190Q-12,201 5,190ZM5,190Q-9,200 -10,217Q-2,204 5,190Z"/><path fill="#6cb435" d="M1786,693L1817,624L1820,592L1827,554L1829,525L1828,499L1817,492L1809,479L1801,468L1789,466L1779,461L1777,450L1744,463L1731,467L1719,474L1704,480L1704,506L1699,526L1701,551L1703,577L1717,610L1735,644Z"/><path fill="#808080" fill-opacity=".2" d="M1782,674Q1798,648 1817,624Q1790,642 1782,674ZM1782,674Q1766,647 1735,644Q1761,656 1782,674ZM1779,654Q1794,619 1820,592Q1786,614 1779,654ZM1779,654Q1757,619 1717,610Q1752,626 1779,654ZM1775,634Q1796,590 1827,554Q1787,585 1775,634ZM1775,634Q1749,593 1703,577Q1743,601 1775,634ZM1772,614Q1793,565 1829,525Q1786,561 1772,614ZM1772,614Q1750,567 1701,551Q1744,574 1772,614ZM1770,594Q1786,539 1828,499Q1779,534 1770,594ZM1770,594Q1749,544 1699,526Q1743,551 1770,594ZM1767,574Q1783,528 1817,492Q1776,523 1767,574ZM1767,574Q1751,526 1704,506Q1745,531 1767,574ZM1765,554Q1778,511 1809,479Q1770,506 1765,554ZM1765,554Q1750,504 1704,480Q1742,511 1765,554ZM1764,534Q1775,497 1801,468Q1768,493 1764,534ZM1764,534Q1752,496 1719,474Q1744,502 1764,534ZM1763,513Q1773,488 1789,466Q1764,483 1763,513ZM1763,513Q1757,483 1731,467Q1750,488 1763,513ZM1762,493Q1770,477 1779,461Q1762,472 1762,493ZM1762,493Q1761,474 1744,463Q1752,479 1762,493Z"/></g></svg><!--/PATTERN-->
<!--LOGO--><svg class="abs" style="left:40px;top:16px" width="340" height="140" viewBox="40 120 340 140">
<defs><clipPath id="pn"><rect x="47" y="128.85" width="76.9" height="130"/><rect x="129" y="128.85" width="75.6" height="130"/><rect x="210" y="128.85" width="75.8" height="130"/><rect x="291.1" y="128.85" width="76.2" height="130"/></clipPath></defs>
<g clip-path="url(#pn)" fill="#fff">
<path opacity=".22" d="M47,128.85L47.0,246.8 50.2,246.5 53.3,246.3 56.5,246.1 59.6,245.9 62.8,245.7 65.9,245.4 69.1,245.2 72.3,244.9 75.4,244.6 78.6,244.1 81.8,243.6 85.0,243.0 88.1,242.3 91.3,241.5 94.6,240.5 98.0,239.5 101.5,238.4 104.9,237.3 108.2,236.2 111.4,235.1 114.5,234.0 117.3,233.0 119.9,232.1 122.1,231.3 124.0,230.6 126.4,228.7 129.0,227.5 130.9,227.1 133.3,226.6 135.9,226.1 138.9,225.5 142.0,224.9 145.3,224.3 148.8,223.7 152.3,223.2 155.8,222.7 159.3,222.2 162.7,221.8 166.0,221.6 169.0,221.4 172.2,221.4 175.6,221.5 179.0,221.7 182.4,222.0 185.9,222.3 189.2,222.7 192.4,223.2 195.4,223.6 198.3,224.0 200.8,224.4 203.1,224.7 205.0,225.0 207.6,225.3 210.0,226.6 212.0,227.3 214.5,228.1 217.2,229.0 220.3,230.0 223.5,231.0 227.0,232.2 230.6,233.3 234.2,234.5 237.9,235.7 241.5,236.9 245.0,238.0 248.1,239.0 251.3,240.0 254.8,241.1 258.4,242.3 262.0,243.4 265.6,244.5 269.1,245.7 272.6,246.7 275.8,247.8 278.9,248.7 281.6,249.6 284.0,250.3 286.0,250.9 288.6,252.3 291.0,251.8 292.9,251.8 295.1,251.7 297.7,251.8 300.5,251.8 303.6,251.8 306.8,251.8 310.2,251.7 313.6,251.5 317.0,251.3 320.4,250.9 323.8,250.4 327.0,249.8 330.0,249.0 333.2,247.9 336.3,246.6 339.4,245.2 342.6,243.6 345.7,241.8 348.8,240.0 351.8,238.1 354.9,236.2 358.0,234.3 361.1,232.4 364.2,230.5 367.3,228.8 367.3,128.85Z"/>
<path opacity=".22" d="M47,128.85L47.0,233.0 50.2,232.9 53.3,232.7 56.5,232.7 59.6,232.6 62.8,232.5 65.9,232.4 69.1,232.3 72.3,232.2 75.4,232.0 78.6,231.7 81.8,231.4 85.0,231.0 88.0,230.5 91.1,230.0 94.2,229.4 97.4,228.7 100.5,228.0 103.7,227.3 106.8,226.5 109.9,225.7 112.9,224.9 115.9,224.2 118.7,223.4 121.4,222.7 124.0,222.0 127.8,220.9 131.2,219.8 134.3,218.6 137.2,217.5 140.2,216.4 143.2,215.5 146.4,214.7 150.0,214.0 152.9,213.6 155.9,213.3 159.0,213.0 162.3,212.8 165.6,212.7 168.9,212.6 172.3,212.6 175.6,212.6 178.8,212.7 182.0,212.8 185.0,213.0 188.2,213.3 191.2,213.6 194.2,214.1 197.1,214.6 200.0,215.1 202.9,215.8 205.8,216.5 208.8,217.2 211.8,218.1 215.0,219.0 218.0,219.9 221.0,221.0 224.0,222.1 227.1,223.3 230.3,224.5 233.5,225.8 236.7,227.1 240.0,228.4 243.3,229.7 246.6,230.9 250.0,232.0 252.9,232.9 256.0,233.9 259.1,234.9 262.3,235.9 265.5,236.9 268.7,237.9 271.9,238.8 275.1,239.7 278.3,240.6 281.3,241.3 284.3,242.0 287.2,242.6 290.0,243.0 293.4,243.4 296.7,243.7 299.9,243.9 303.0,243.9 305.9,243.8 308.8,243.6 311.7,243.3 314.5,243.0 317.2,242.5 320.0,242.0 323.4,241.2 326.7,240.2 329.9,239.1 333.0,237.8 336.0,236.4 339.1,235.0 342.0,233.5 345.0,232.0 348.3,230.2 351.6,228.3 354.7,226.3 357.9,224.2 361.0,222.1 364.1,220.0 367.3,218.0 367.3,128.85Z"/>
<path opacity=".3" d="M47,128.85L47.0,220.0 50.0,220.2 53.0,220.3 56.1,220.5 59.1,220.6 62.2,220.8 65.2,221.0 68.2,221.1 71.2,221.3 74.2,221.5 77.1,221.7 80.0,222.0 83.1,222.4 86.2,222.8 89.2,223.4 92.2,224.0 95.2,224.6 98.1,225.1 101.1,225.5 104.0,225.9 107.0,226.0 110.0,226.0 113.0,225.8 116.0,225.3 119.0,224.7 122.0,224.0 125.0,223.2 128.0,222.4 131.0,221.5 134.0,220.6 137.0,219.8 140.0,219.0 143.0,218.2 145.9,217.3 148.8,216.3 151.8,215.3 154.7,214.3 157.6,213.4 160.6,212.5 163.7,211.8 166.8,211.3 170.0,211.0 173.0,210.9 176.2,210.9 179.5,211.1 182.8,211.4 186.1,211.7 189.5,212.2 192.8,212.7 196.0,213.2 199.2,213.8 202.2,214.4 205.0,215.0 208.6,215.9 211.8,217.0 214.9,218.2 217.8,219.5 220.7,220.8 223.6,222.0 226.7,223.1 230.0,224.0 232.8,224.6 235.7,225.1 238.6,225.6 241.6,226.0 244.6,226.3 247.7,226.6 250.8,227.0 253.9,227.3 256.9,227.6 260.0,228.0 263.0,228.4 266.1,228.9 269.1,229.3 272.2,229.8 275.2,230.2 278.3,230.7 281.4,231.1 284.6,231.5 287.8,231.8 291.0,232.0 294.0,232.2 297.1,232.4 300.3,232.6 303.5,232.7 306.8,232.8 310.0,232.9 313.2,232.9 316.3,232.8 319.3,232.7 322.2,232.4 325.0,232.0 328.6,231.2 332.1,230.2 335.4,229.0 338.5,227.6 341.6,226.2 344.5,224.7 347.3,223.3 350.0,222.0 354.0,220.0 357.5,218.0 360.7,216.0 364.0,214.0 367.3,212.0 367.3,128.85Z"/>
<path opacity=".55" d="M47,128.85L47.0,213.0 50.2,213.1 53.4,213.1 56.5,213.2 59.7,213.2 62.9,213.3 66.3,213.6 70.0,214.0 72.7,214.4 75.6,215.0 78.5,215.7 81.5,216.5 84.6,217.2 87.7,218.0 90.9,218.7 94.0,219.3 97.0,219.7 100.0,220.0 103.2,220.1 106.3,220.0 109.3,219.8 112.4,219.5 115.4,219.1 118.6,218.7 121.8,218.1 125.3,217.6 129.0,217.0 131.7,216.5 134.6,216.0 137.6,215.4 140.6,214.7 143.8,214.0 147.0,213.2 150.2,212.5 153.4,211.8 156.6,211.2 159.8,210.6 163.0,210.1 166.0,209.7 169.0,209.5 172.1,209.4 175.2,209.4 178.3,209.6 181.3,209.9 184.3,210.2 187.3,210.6 190.3,211.0 193.2,211.4 196.2,211.8 199.1,212.1 202.0,212.4 205.0,212.5 208.2,212.5 211.5,212.4 214.8,212.2 218.0,212.0 221.3,211.8 224.5,211.5 227.7,211.3 230.8,211.1 234.0,210.9 237.0,210.9 240.0,211.0 243.2,211.2 246.3,211.6 249.4,212.0 252.4,212.5 255.3,213.0 258.2,213.6 261.2,214.2 264.1,214.8 267.0,215.4 270.0,216.0 273.0,216.6 276.0,217.2 279.0,217.8 282.0,218.4 285.0,219.1 288.0,219.7 291.0,220.3 294.0,220.9 297.0,221.5 300.0,222.0 303.0,222.5 306.2,223.1 309.3,223.7 312.5,224.3 315.6,224.8 318.7,225.3 321.7,225.7 324.6,225.9 327.4,226.1 330.0,226.0 333.9,225.5 337.5,224.6 340.8,223.3 343.9,221.9 346.9,220.4 350.0,219.0 353.6,217.3 357.1,215.5 360.5,213.7 363.9,211.8 367.3,210.0 367.3,128.85Z"/>
<path d="M47,128.85L47.0,206.3 50.3,207.3 53.6,208.3 56.9,209.4 60.2,210.4 63.5,211.4 66.8,212.5 70.0,213.5 73.2,214.6 76.5,215.9 79.8,217.2 83.0,218.5 86.2,219.6 89.2,220.5 92.0,221.0 95.6,221.1 98.8,220.6 101.9,219.8 104.9,218.8 108.0,218.0 111.4,217.2 114.9,216.4 118.4,215.6 121.5,214.7 124.0,214.0 126.2,212.6 129.0,211.3 131.2,210.8 133.9,210.3 137.0,209.8 140.3,209.3 143.7,208.8 147.0,208.4 150.0,208.0 153.3,207.6 156.4,207.3 159.5,207.1 162.6,206.9 165.7,206.8 169.0,206.7 171.9,206.7 175.0,206.7 178.2,206.8 181.3,207.0 184.4,207.1 187.3,207.3 190.0,207.5 193.5,207.9 196.9,208.3 200.0,208.8 202.7,209.2 205.0,209.4 206.4,208.8 210.0,208.0 212.0,207.9 214.4,207.8 217.1,207.8 220.2,207.7 223.4,207.6 226.8,207.6 230.3,207.5 233.7,207.5 237.0,207.5 240.1,207.5 243.0,207.6 246.3,207.7 249.6,207.9 252.9,208.0 256.0,208.3 259.1,208.5 262.0,208.7 264.9,209.0 267.5,209.2 270.0,209.5 274.1,210.0 277.7,210.5 280.9,211.1 283.7,211.6 286.0,212.0 288.3,212.4 291.0,213.0 293.4,213.6 296.3,214.3 299.7,215.1 303.3,215.9 306.8,216.7 310.0,217.5 313.6,218.5 317.2,219.5 320.6,220.5 324.1,221.2 327.6,221.4 331.2,221.1 334.8,220.3 338.4,219.2 341.8,218.1 345.0,217.0 348.6,215.8 352.0,214.5 355.1,213.2 358.0,212.0 361.4,210.6 364.3,209.3 367.3,208.0 367.3,128.85Z"/>
</g>
<g fill="#6cb435" font-family="Liberation Sans, sans-serif" font-weight="700" font-size="71" text-anchor="middle"><text transform="translate(85.4 0) scale(1.1 1)" x="0" y="196.5">A</text><text transform="translate(168.6 0) scale(0.945 1)" x="0" y="196.5">P</text><text transform="translate(246.7 0) scale(0.935 1)" x="0" y="196.5">E</text><text transform="translate(327.9 0) scale(1.0 1)" x="0" y="196.5">M</text></g>
</svg>
<!--/LOGO-->
<!--BURGER--><div class="abs" style="left:1727px;top:58px;width:60px;height:7px;background:#fff"></div><div class="abs" style="left:1727px;top:77px;width:60px;height:7px;background:#fff"></div><div class="abs" style="left:1727px;top:97px;width:60px;height:7px;background:#fff"></div>
<!--/BURGER-->
<main>
<div class="t date" style="top:252px;letter-spacing:-.35px"><span>01 Jul 19</span><span style="padding:0 9.5px 0 11.5px;position:relative;top:-2px"> | </span><span>Blog</span></div>
<h1><span class="t h1w" style="top:346px;left:128.6px"><span style="letter-spacing:-0.40px">International </span><span style="letter-spacing:-1.18px">Polychaete </span><span style="letter-spacing:-2.77px">Day: </span><span style="letter-spacing:-0.77px">why </span><span style="letter-spacing:0.30px">we</span></span> <span class="t h1w" style="top:439px;left:126.1px"><span style="letter-spacing:-0.55px">love </span><span style="letter-spacing:-1.45px">polychaetes</span></span></h1>
<p><span class="t p" style="top:578px;left:125.7px;letter-spacing:0"><span style="letter-spacing:1.00px">Today </span><span style="letter-spacing:-0.80px">is </span><span style="letter-spacing:1.47px">International </span><span style="letter-spacing:1.03px">Polychaete </span><span style="letter-spacing:0.85px">Day. </span><span style="letter-spacing:-0.13px">A </span><span style="letter-spacing:0.28px">day </span><span style="letter-spacing:2.06px">to </span><span style="letter-spacing:1.16px">celebrate </span><span style="letter-spacing:4.17px">both</span></span> <span class="t p" style="top:640px;left:127.4px;letter-spacing:0"><span style="letter-spacing:1.03px">polychaetes </span><span style="letter-spacing:0.19px">(also </span><span style="letter-spacing:2.29px">known </span><span style="letter-spacing:-1.03px">as </span><span style="letter-spacing:1.24px">bristle </span><span style="letter-spacing:1.30px">worms) </span><span style="letter-spacing:0.65px">and </span><span style="letter-spacing:0.73px">researcher, </span><span style="letter-spacing:0.34px">Kristian</span></span> <span class="t p" style="top:702px;left:127.9px;letter-spacing:0"><span style="letter-spacing:0.43px">Fauchald, </span><span style="letter-spacing:1.79px">who </span><span style="letter-spacing:1.44px">made </span><span style="letter-spacing:0.21px">leaps </span><span style="letter-spacing:0.85px">and </span><span style="letter-spacing:1.50px">bounds </span><span style="letter-spacing:1.73px">in </span><span style="letter-spacing:1.22px">studying </span><span style="letter-spacing:0.78px">these </span><span style="letter-spacing:1.07px">fascinating</span></span> <span class="t p" style="top:764px;left:128.2px;letter-spacing:0"><span style="letter-spacing:2.06px">worms.</span></span></p>
</main>
</div>
<div id="sb"><i></i><b></b></div>
<div id="chrome">
<div id="pill"></div>
<div id="url"><span style="letter-spacing:.85px">https://</span><b style="letter-spacing:.1px">www.apemltd.com</b><span style="letter-spacing:-.2px">/international-polychaete-day-why-we-love-polychaetes/?cn-reloa…</span></div>
<!--ICONS--><svg class="abs" style="left:0;top:0" width="1844" height="104" viewBox="0 0 1844 104" fill="none" stroke-linecap="round" stroke-linejoin="round">
<defs>
<linearGradient id="bg1" x1="0" y1="0" x2="1" y2="1"><stop offset="0" stop-color="#22b4f0"/><stop offset=".55" stop-color="#1b6fe4"/><stop offset="1" stop-color="#1a4fd0"/></linearGradient>
<linearGradient id="bg2" x1="0" y1="0" x2="0" y2="1"><stop offset="0" stop-color="#3aa6f7"/><stop offset="1" stop-color="#2250d6"/></linearGradient>
<linearGradient id="bg3" x1="0" y1="0" x2="1" y2="0"><stop offset="0" stop-color="#37c4f2"/><stop offset="1" stop-color="#2a55dd"/></linearGradient>
<linearGradient id="bg4" x1="0" y1="0" x2="1" y2="1"><stop offset="0" stop-color="#2fb2f2"/><stop offset="1" stop-color="#3ad6c4"/></linearGradient>
<clipPath id="av"><circle cx="1687.9" cy="28.8" r="16"/></clipPath>
<symbol id="fold" viewBox="0 0 24 22" overflow="visible"><path d="M.75,3.3Q.75,.8 3.25,.8L8.8,.8Q9.8,.8 10.5,1.5L12.2,3.2L19.8,3.2Q22.3,3.2 22.3,5.7L22.3,17.7Q22.3,20.2 19.8,20.2L3.25,20.2Q.75,20.2 .75,17.7Z" fill="#fde085" stroke="#c3950d" stroke-width="1.45"/><path d="M.75,6.3L.75,3.3Q.75,.8 3.25,.8L8.8,.8Q9.8,.8 10.5,1.5L12.2,3.2L9.5,5.6Q8.8,6.3 7.8,6.3Z" fill="#fdd740" stroke="#c3950d" stroke-width="1.45"/></symbol>
</defs>
<g stroke="#3d3d3d" stroke-width="1.6"><path d="M36.2,18.9L26.8,28.3L36.2,37.8M27.2,28.3H48.5"/><path d="M100.4,18.9L109.8,28.3L100.4,37.8M88.1,28.3H109.4"/>
<path d="M171.60,30.59A10.7,10.7 0 1 1 170.07,23.43"/><path d="M170.8,18.6V24.1H165"/></g>
<g stroke="#5a5a5a" stroke-width="1.5"><rect x="230.3" y="25.2" width="14.6" height="12.8" rx="2"/><path d="M233.2,25V23a4.4,4.4 0 0 1 8.8,0V25"/></g><circle cx="237.6" cy="31.6" r="1.4" fill="#5a5a5a"/>
<g stroke="#757575" stroke-width="1.5"><path d="M1327.6,22V38.4H1318.4Q1316.9,38.4 1316.9,36.9V22Q1316.9,20.5 1318.4,20.5H1326.1Q1327.6,20.5 1327.6,22ZM1327.6,22Q1327.6,20.5 1329.1,20.5H1336.8Q1338.3,20.5 1338.3,22V31.5"/><path d="M1336.4,33.6Q1337.9,36.6 1336.4,39.6M1338.9,32.2Q1341.2,36.6 1338.9,41" stroke-width="1.2"/></g><path d="M1327.4,35H1329.9L1333.6,32V41.2L1329.9,38.2H1327.4Z" fill="#757575"/>
<g stroke="#757575" stroke-width="1.5"><circle cx="1376" cy="27.8" r="7.5"/><path d="M1372,27.8H1380M1376,23.8V31.8M1381.4,33.2L1387.4,38.8"/></g>
<path d="M1427.8,19.0L1431.0,26.2L1438.8,27.0L1432.9,32.3L1434.6,40.0L1427.8,36.0L1421.0,40.0L1422.7,32.3L1416.8,27.0L1424.6,26.2Z" stroke="#757575" stroke-width="1.5"/><circle cx="1435.2" cy="36" r="7.2" fill="#fff"/><circle cx="1435.2" cy="36" r="5.9" fill="#757575"/><path d="M1432.2,36H1438.2M1435.2,33V39" stroke="#fff" stroke-width="1.5"/>
<g stroke="#3d3d3d" stroke-width="1.6"><path d="M1502.7,26.4L1499.6,19.2L1496.5,26.4L1488.8,27.1L1494.7,32.2L1492.9,39.8L1499.6,35.8"/><path d="M1503.4,27.8H1511.2M1503.4,31.4H1511.2M1503.4,35.1H1511.2"/></g>
<g stroke="#3d3d3d" stroke-width="1.6"><path d="M1556.3,36.2L1554.6,36.5Q1552.9,36.7 1552.6,35L1551,23Q1550.8,21.3 1552.5,21L1563.5,19.3Q1565.2,19.1 1565.5,20.8L1565.9,23.6"/><rect x="1558.2" y="26" width="14.6" height="14.3" rx="2.6"/><path d="M1561.6,33.2H1569.4M1565.5,29.3V37.1"/></g>
<g stroke="#3d3d3d" stroke-width="1.6"><path d="M1624,40.4L1617.4,33.8M1614.1,28.6Q1611.8,24.2 1615.3,21.3Q1619.6,18.6 1624,23Q1628.4,18.6 1632.7,21.3Q1636.2,24.2 1633.9,28.6"/><path d="M1613.2,31H1618.2L1620.6,26.2L1624.2,33.6L1626.6,29.4L1628,31H1634.8" stroke-width="1.4"/></g><circle cx="1630.4" cy="37.6" r="6" fill="#f9f9f9"/><circle cx="1630.4" cy="37.6" r="4.9" fill="#3d3d3d"/><path d="M1628.1,37.8L1629.8,39.5L1632.8,36" stroke="#fff" stroke-width="1.3"/>
<circle cx="1687.9" cy="28.8" r="16" fill="#d6d3cf"/><g clip-path="url(#av)" fill="#8f8c89"><circle cx="1687.9" cy="24.6" r="7"/><ellipse cx="1687.9" cy="44" rx="11.6" ry="11.2"/></g>
<g fill="#3d3d3d"><circle cx="1745" cy="29.2" r="1.75"/><circle cx="1752.9" cy="29.2" r="1.75"/><circle cx="1760.7" cy="29.2" r="1.75"/></g>
<path transform="translate(1 0)" d="M1819.4,8.7A20.5,20.5 0 1 1 1814,49.2Q1810.5,47.8 1806.6,48.6Q1802.5,49.8 1799.6,50.3Q1798.2,50.3 1798.6,49Q1801.2,43 1800.2,38.6A20.5,20.5 0 0 1 1819.4,8.7Z" fill="#fff" stroke="url(#bg1)" stroke-width="1.8"/>
<path d="M1811.9,16.2Q1811.9,14.6 1813.4,15.2L1816.8,16.8Q1818.2,17.5 1818.2,19V37.4L1815,39.6Q1811.9,38.6 1811.9,36Z" fill="url(#bg2)"/>
<path d="M1811.9,36Q1812.2,40.6 1816.4,42.9Q1819.8,44.6 1823.2,42.6L1829.3,38.8Q1831.6,36.6 1830,33.8Q1829,32.6 1827.4,33.3L1818.2,38.6Q1814.6,40.4 1811.9,36Z" fill="url(#bg3)"/>
<path d="M1820.8,24.3Q1820.4,23.4 1821.6,23.9L1827.6,26.8Q1831.4,29.2 1830.8,33.4Q1830.6,35.4 1829.9,34Q1829,32.6 1827.4,33.3L1824.4,32Q1823.6,31.6 1823.2,30.6Z" fill="url(#bg4)"/>
<path d="M19,72.9L24.1,76.7V84H20.5Q19,84 19,82.5Z" fill="#4285f4"/><path d="M19,72.9V70.6Q19,68.6 20.9,68.3Q22,68.2 23,68.9L24.1,69.8V76.7Z" fill="#c5221f"/><path d="M24.1,69.8L29.55,73.9L35,69.8V76.7L29.55,80.6L24.1,76.7Z" fill="#ea4335"/><path d="M35,69.8L36.1,68.9Q37.1,68.2 38.2,68.3Q40.1,68.6 40.1,70.6V72.9L35,76.7Z" fill="#fbbc04"/><path d="M35,76.7L40.1,72.9V82.5Q40.1,84 38.6,84H35Z" fill="#34a853"/>
<path d="M235.6,65H253.4L256,67.6V88H235.6L233,85.4V67.6Z" fill="#6fa898"/>
<g stroke="#fff" stroke-opacity=".85" stroke-width="1.15"><rect transform="rotate(0 244.4 76.5)" x="240.9" y="68.4" width="9.6" height="5.6" rx="2.8"/><rect transform="rotate(60 244.4 76.5)" x="240.9" y="68.4" width="9.6" height="5.6" rx="2.8"/><rect transform="rotate(120 244.4 76.5)" x="240.9" y="68.4" width="9.6" height="5.6" rx="2.8"/><rect transform="rotate(180 244.4 76.5)" x="240.9" y="68.4" width="9.6" height="5.6" rx="2.8"/><rect transform="rotate(240 244.4 76.5)" x="240.9" y="68.4" width="9.6" height="5.6" rx="2.8"/><rect transform="rotate(300 244.4 76.5)" x="240.9" y="68.4" width="9.6" height="5.6" rx="2.8"/></g><circle cx="244.4" cy="76.5" r="1.2" fill="#4f927f"/>
<use href="#fold" x="379" y="66" width="24" height="22"/>
<use href="#fold" x="570.2" y="66" width="24" height="22"/>
<use href="#fold" x="766.2" y="66" width="24" height="22"/>
<use href="#fold" x="981.3" y="66" width="24" height="22"/>
<use href="#fold" x="1108.1" y="66" width="24" height="22"/>
<use href="#fold" x="1318" y="66" width="24" height="22"/>
<use href="#fold" x="1652" y="66" width="24" height="22"/>
<path d="M1609.3,68.6L1617.6,76.6L1609.3,84.6" stroke="#ee1118" stroke-width="1.5"/><path d="M1637.4,65.4V87.4" stroke="#ee1118" stroke-width="1.3"/>
</svg><!--/ICONS-->
<!--BOOKMARKS--><div class="bm" style="left:51.3px;letter-spacing:-0.01px">Caixa de entra…</div>
<div class="bm" style="left:266.4px;letter-spacing:0.38px">New chat</div>
<div class="bm" style="left:412.8px;letter-spacing:-0.09px">Estatística e R</div>
<div class="bm" style="left:604.5px;letter-spacing:0.09px">Prog Python-R</div>
<div class="bm" style="left:799.5px;letter-spacing:0.63px">Reprodutibilid…</div>
<div class="bm" style="left:1014.0px;letter-spacing:0.36px">Treinos</div>
<div class="bm" style="left:1141.0px;letter-spacing:0.12px">Ecologia funci…</div>
<div class="bm" style="left:1351.8px;letter-spacing:-0.22px">Lazarus</div>
<div class="bm" style="left:1685.7px;letter-spacing:0.56px">Outros favoritos</div><!--/BOOKMARKS-->
</div>
</body>
</html>
